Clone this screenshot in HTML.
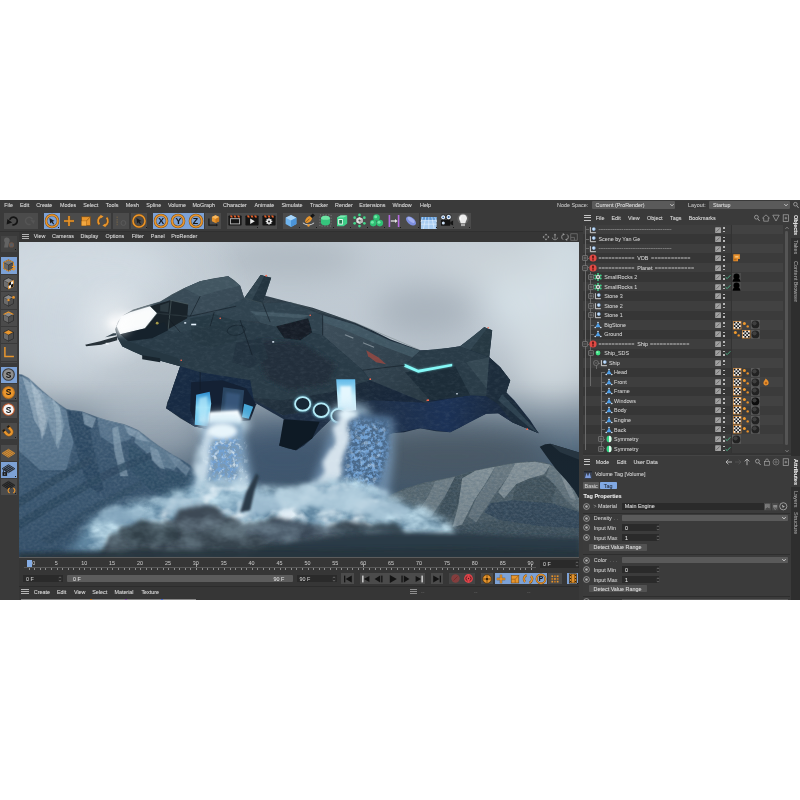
<!DOCTYPE html>
<html><head><meta charset="utf-8"><title>Cinema 4D</title>
<style>
html,body{margin:0;padding:0;background:#fff;width:800px;height:800px;overflow:hidden;}
body{position:relative;font-family:"Liberation Sans", sans-serif;}
#app{position:absolute;left:0;top:200px;width:800px;height:399.5px;background:#3a3a3a;overflow:hidden;}
#g{position:absolute;left:0;top:-200px;width:800px;height:800px;}
#tx{position:absolute;left:0;top:-200px;width:800px;height:800px;will-change:transform;}
.t{position:absolute;white-space:nowrap;line-height:8px;height:8px;-webkit-text-stroke:0.04px currentColor;}
.r{position:absolute;}
svg{position:absolute;overflow:visible;}
</style></head><body>
<div id="app"><div id="g">




















<div class="r" style="left:591.50px;top:200.50px;width:83.50px;height:8.60px;background:#5a5a5a;border-radius:1px;"></div>


<div class="r" style="left:709.00px;top:200.50px;width:81.00px;height:8.60px;background:#5a5a5a;border-radius:1px;"></div>

<svg style="left:668.7px;top:202.2px" width="6" height="6" viewBox="-3 -3 6 6"><path d="M-1.6 -0.8 L0 0.8 L1.6 -0.8" fill="none" stroke="#ddd" stroke-width="0.9"/></svg>
<svg style="left:782.5px;top:202.2px" width="6" height="6" viewBox="-3 -3 6 6"><path d="M-1.6 -0.8 L0 0.8 L1.6 -0.8" fill="none" stroke="#ddd" stroke-width="0.9"/></svg>
<svg style="left:792px;top:201px" width="8" height="8" viewBox="-4 -4 8 8"><circle cx="-0.6" cy="-0.8" r="1.8" fill="none" stroke="#aaa" stroke-width="0.8"/><path d="M0.7 0.6 L2.6 3" stroke="#aaa" stroke-width="0.9" fill="none"/></svg>
<div class="r" style="left:4.00px;top:212.80px;width:33.60px;height:16.00px;background:#4b4b4b;"></div>
<div class="r" style="left:43.80px;top:212.80px;width:67.20px;height:16.00px;background:#4b4b4b;"></div>
<div class="r" style="left:43.80px;top:212.80px;width:15.80px;height:16.00px;background:#7da2d6;"></div>
<div class="r" style="left:113.00px;top:212.80px;width:16.20px;height:16.00px;background:#4b4b4b;"></div>
<div class="r" style="left:131.20px;top:212.80px;width:16.20px;height:16.00px;background:#4b4b4b;"></div>
<div class="r" style="left:152.80px;top:212.80px;width:51.20px;height:16.00px;background:#7da2d6;"></div>
<div class="r" style="left:205.40px;top:212.80px;width:16.00px;height:16.00px;background:#4b4b4b;"></div>
<div class="r" style="left:226.50px;top:212.80px;width:50.50px;height:16.00px;background:#4b4b4b;"></div>
<div class="r" style="left:282.50px;top:212.80px;width:136.90px;height:16.00px;background:#4b4b4b;"></div>
<div class="r" style="left:420.40px;top:212.80px;width:51.10px;height:16.00px;background:#4b4b4b;"></div>
<svg style="left:5.60px;top:213.80px" width="14" height="14" viewBox="-7.0 -7.0 14 14"><path d="M-0.6 3.6 A3.8 3.8 0 1 0 -3.2 -1.2" fill="none" stroke="#141414" stroke-width="1.8"/><path d="M-6.4 3.4 L-5.6 -2 L-0.8 1.4 Z" fill="#141414"/></svg>
<svg style="left:22.00px;top:213.80px" width="14" height="14" viewBox="-7.0 -7.0 14 14"><g transform="scale(-1,1)" opacity="0.55"><path d="M-1.5 3.2 A3.6 3.6 0 1 0 -3.4 -1.6" fill="none" stroke="#5e5e5e" stroke-width="1.5"/><path d="M-6 -0.4 L-1.4 -0.9 L-4.6 2.9 Z" fill="#5e5e5e"/></g></svg>
<svg style="left:43.70px;top:212.80px" width="16" height="16" viewBox="-8.0 -8.0 16 16"><circle r="6" fill="none" stroke="#7a4a12" stroke-width="2.5"/><circle r="6" fill="none" stroke="#e8962e" stroke-width="1.6"/><path d="M-2.6 -3 L2.6 0 L0.6 0.6 L2.2 3 L1.2 3.6 L-0.4 1.2 L-1.8 2.6 Z" fill="#1c1c1c"/></svg>
<div class="r" style="left:58.00px;top:227.20px;width:1.20px;height:1.20px;background:#1a1a1a;"></div>
<svg style="left:61.90px;top:213.80px" width="14" height="14" viewBox="-7.0 -7.0 14 14"><path d="M-5 0 H5 M0 -5 V5" stroke="#7a4a12" stroke-width="2.6"/><path d="M-5 0 H5 M0 -5 V5" stroke="#e8962e" stroke-width="1.6"/></svg>
<svg style="left:78.70px;top:213.80px" width="14" height="14" viewBox="-7.0 -7.0 14 14"><rect x="-4.4" y="-4.2" width="8.8" height="8.8" fill="#e8962e" stroke="#7a4a12" stroke-width="0.6"/><path d="M-4.4 0.2 H0.2 V4.6 M0.2 0.2 L4.4 -4.2" fill="none" stroke="#9a5e14" stroke-width="0.8"/><rect x="-4.4" y="0.2" width="4.6" height="4.4" fill="#f3a840"/></svg>
<svg style="left:95.50px;top:213.80px" width="14" height="14" viewBox="-7.0 -7.0 14 14"><g fill="none" stroke="#7a4a12" stroke-width="2.6"><path d="M-1.8 -4.6 A5 5 0 0 0 -3.6 3.4"/><path d="M1.8 4.6 A5 5 0 0 0 3.6 -3.4"/></g><g fill="none" stroke="#e8962e" stroke-width="1.7"><path d="M-1.8 -4.6 A5 5 0 0 0 -3.6 3.4"/><path d="M1.8 4.6 A5 5 0 0 0 3.6 -3.4"/></g><path d="M-2.6 -6.2 L0.6 -4.4 L-2.4 -2.6 Z M2.6 6.2 L-0.6 4.4 L2.4 2.6 Z" fill="#e8962e"/></svg>
<svg style="left:114.00px;top:213.80px" width="14" height="14" viewBox="-7.0 -7.0 14 14"><g opacity="0.5"><path d="M-3.8 -4.5 V4.5" stroke="#7d6a4a" stroke-width="1.6" stroke-dasharray="1.6 0.8"/><circle cx="2.4" cy="2" r="2.4" fill="none" stroke="#6a6a6a" stroke-width="1"/></g></svg>
<svg style="left:131.30px;top:212.80px" width="16" height="16" viewBox="-8.0 -8.0 16 16"><circle r="6" fill="none" stroke="#7a4a12" stroke-width="2.4"/><circle r="6" fill="none" stroke="#e8962e" stroke-width="1.5"/><path d="M-2.6 -3 L2.6 0 L0.6 0.6 L2.2 3 L1.2 3.6 L-0.4 1.2 L-1.8 2.6 Z" fill="#1c1c1c"/></svg>
<div class="r" style="left:145.60px;top:227.20px;width:1.20px;height:1.20px;background:#1a1a1a;"></div>
<svg style="left:153.30px;top:212.80px" width="16" height="16" viewBox="-8.0 -8.0 16 16"><circle r="6" fill="none" stroke="#7a4a12" stroke-width="2.6"/><circle r="6" fill="none" stroke="#e8962e" stroke-width="1.7"/></svg>

<svg style="left:170.40px;top:212.80px" width="16" height="16" viewBox="-8.0 -8.0 16 16"><circle r="6" fill="none" stroke="#7a4a12" stroke-width="2.6"/><circle r="6" fill="none" stroke="#e8962e" stroke-width="1.7"/></svg>

<svg style="left:187.50px;top:212.80px" width="16" height="16" viewBox="-8.0 -8.0 16 16"><circle r="6" fill="none" stroke="#7a4a12" stroke-width="2.6"/><circle r="6" fill="none" stroke="#e8962e" stroke-width="1.7"/></svg>

<svg style="left:205.90px;top:213.30px" width="15" height="15" viewBox="-7.5 -7.5 15 15"><path d="M-4.6 -2 V4.6 H3.4" fill="none" stroke="#1a1a1a" stroke-width="1.3"/><path d="M2.6 3.2 L4.6 4.6 L2.6 6 Z" fill="#1a1a1a"/><path d="M-1.6 -3.4 L2 -5.2 L5.6 -3.4 L5.6 0.8 L2 2.6 L-1.6 0.8 Z" fill="#e8962e"/><path d="M-1.6 -3.4 L2 -1.6 L5.6 -3.4 L2 -5.2 Z" fill="#f7b860"/><path d="M2 -1.6 V2.6 L5.6 0.8 V-3.4 Z" fill="#c9781c"/></svg>
<svg style="left:227.60px;top:215.10px" width="14" height="11" viewBox="-7.0 -5.5 14 11"><rect x="-6.6" y="-5" width="13.2" height="10" rx="0.8" fill="#141414"/><g fill="#e8622a"><path d="M-5 -5 H-3 L-2.2 -2.9 H-4.2 Z"/><path d="M-1.4 -5 H0.6 L1.4 -2.9 H-0.6 Z"/><path d="M2.2 -5 H4.2 L5 -2.9 H3 Z"/></g><rect x="-4.6" y="-1.8" width="9.2" height="5.2" fill="none" stroke="#bdbdbd" stroke-width="0.9"/></svg>
<svg style="left:244.60px;top:215.10px" width="14" height="11" viewBox="-7.0 -5.5 14 11"><rect x="-6.6" y="-5" width="13.2" height="10" rx="0.8" fill="#141414"/><g fill="#e8622a"><path d="M-5 -5 H-3 L-2.2 -2.9 H-4.2 Z"/><path d="M-1.4 -5 H0.6 L1.4 -2.9 H-0.6 Z"/><path d="M2.2 -5 H4.2 L5 -2.9 H3 Z"/></g><path d="M-1.8 -1.9 L2.8 0.8 L-1.8 3.5 Z" fill="#e8e8e8"/></svg>
<div class="r" style="left:257.40px;top:227.40px;width:1.10px;height:1.10px;background:#1a1a1a;"></div>
<svg style="left:261.90px;top:215.10px" width="14" height="11" viewBox="-7.0 -5.5 14 11"><rect x="-6.6" y="-5" width="13.2" height="10" rx="0.8" fill="#141414"/><g fill="#e8622a"><path d="M-5 -5 H-3 L-2.2 -2.9 H-4.2 Z"/><path d="M-1.4 -5 H0.6 L1.4 -2.9 H-0.6 Z"/><path d="M2.2 -5 H4.2 L5 -2.9 H3 Z"/></g><circle cx="0" cy="0.9" r="2.5" fill="#e6e6e6"/><circle cx="0" cy="0.9" r="1" fill="#141414"/><g stroke="#e6e6e6" stroke-width="1.1"><path d="M0 -2.4 V4.2 M-3.3 0.9 H3.3 M-2.3 -1.4 L2.3 3.2 M2.3 -1.4 L-2.3 3.2"/></g><circle cx="0" cy="0.9" r="1" fill="#141414"/></svg>
<svg style="left:284.30px;top:213.90px" width="14" height="14" viewBox="-7.0 -7.0 14 14"><path d="M0 -6 L5.4 -3.3 V3 L0 6 L-5.4 3 V-3.3 Z" fill="#6fb4ee"/><path d="M0 -6 L5.4 -3.3 L0 -0.6 L-5.4 -3.3 Z" fill="#a9d6fa"/><path d="M0 -0.6 V6 L5.4 3 V-3.3 Z" fill="#4b94d8"/></svg>
<div class="r" style="left:298.80px;top:227.40px;width:1.10px;height:1.10px;background:#1a1a1a;"></div>
<svg style="left:300.70px;top:213.40px" width="15" height="15" viewBox="-7.5 -7.5 15 15"><path d="M-5.6 2.4 Q0 6.6 5.6 2.4" fill="none" stroke="#e0e0e0" stroke-width="0.9"/><circle cx="0" cy="5" r="1.2" fill="#e8962e"/><path d="M-3.4 1.2 C-3.4 -2 -0.8 -4.2 1.6 -4.6 L3.6 -2.4 C3.2 0.2 1 2.6 -2.2 2.6 Z" fill="#e8962e"/><path d="M1.6 -4.6 L4.4 -7 L6.4 -5 L3.6 -2.4 Z" fill="#151515"/><path d="M-2.6 1.8 L1 -1.8" stroke="#7a4a12" stroke-width="0.7"/></svg>
<div class="r" style="left:315.80px;top:227.40px;width:1.10px;height:1.10px;background:#1a1a1a;"></div>
<svg style="left:317.50px;top:213.40px" width="15" height="15" viewBox="-7.5 -7.5 15 15"><rect x="-5.6" y="-5.6" width="11.2" height="11.2" fill="none" stroke="#9a9a9a" stroke-width="0.6" stroke-dasharray="1.2 1.6"/><path d="M0 -4.8 C3 -4.8 4.6 -3.6 4.6 -1 V2 C4.6 4 2.6 5 0 5 C-2.6 5 -4.6 4 -4.6 2 V-1 C-4.6 -3.6 -3 -4.8 0 -4.8 Z" fill="#35c47c"/><path d="M0 -4.8 C3 -4.8 4.6 -3.6 4.4 -1.6 C2 -0.4 -2 -0.4 -4.4 -1.6 C-4.6 -3.6 -3 -4.8 0 -4.8 Z" fill="#6fe4a4"/></svg>
<div class="r" style="left:332.60px;top:227.40px;width:1.10px;height:1.10px;background:#1a1a1a;"></div>
<svg style="left:335.00px;top:213.90px" width="14" height="14" viewBox="-7.0 -7.0 14 14"><path d="M-5 -3.4 L-1.4 -5.4 H5.2 V2.6 L1.6 5.2 H-5 Z" fill="#3ecf88"/><path d="M-5 -3.4 L-1.4 -5.4 H5.2 L1.6 -3.4 Z" fill="#7ceab2"/><rect x="-3.8" y="-2" width="4.6" height="5.6" fill="#e6f6ee"/><rect x="-2.8" y="-1" width="2.8" height="3.6" fill="#2a7a54"/></svg>
<div class="r" style="left:349.60px;top:227.40px;width:1.10px;height:1.10px;background:#1a1a1a;"></div>
<svg style="left:351.80px;top:213.40px" width="15" height="15" viewBox="-7.5 -7.5 15 15"><path d="M0 -3.6 L3.2 -1.8 V1.8 L0 3.6 L-3.2 1.8 V-1.8 Z" fill="#e2e4e2"/><path d="M0 0 V3.6 L3.2 1.8 V-1.8 Z" fill="#b4b8b4"/><circle r="1.1" fill="#555"/><circle cx="0.00" cy="-5.60" r="1.35" fill="#3fd88a"/><circle cx="4.85" cy="-2.80" r="1.35" fill="#3fd88a"/><circle cx="4.85" cy="2.80" r="1.35" fill="#3fd88a"/><circle cx="0.00" cy="5.60" r="1.35" fill="#3fd88a"/><circle cx="-4.85" cy="2.80" r="1.35" fill="#3fd88a"/><circle cx="-4.85" cy="-2.80" r="1.35" fill="#3fd88a"/></svg>
<div class="r" style="left:366.80px;top:227.40px;width:1.10px;height:1.10px;background:#1a1a1a;"></div>
<svg style="left:368.90px;top:213.40px" width="15" height="15" viewBox="-7.5 -7.5 15 15"><g fill="#2fbf74"><circle cx="0" cy="-3" r="3.3"/><circle cx="-3.3" cy="2.6" r="3.3"/><circle cx="3.3" cy="2.6" r="3.3"/></g><g fill="#6ee8a6"><circle cx="-0.8" cy="-3.8" r="1.5"/><circle cx="-4.1" cy="1.8" r="1.5"/><circle cx="2.5" cy="1.8" r="1.5"/></g></svg>
<div class="r" style="left:383.80px;top:227.40px;width:1.10px;height:1.10px;background:#1a1a1a;"></div>
<svg style="left:386.70px;top:213.90px" width="14" height="14" viewBox="-7.0 -7.0 14 14"><rect x="-5.4" y="-6" width="1.6" height="12" fill="#b56be0"/><rect x="3.8" y="-6" width="1.6" height="12" fill="#b56be0"/><path d="M-3.2 0 H1.6" stroke="#e4e4e4" stroke-width="1.3"/><path d="M1 -2 L3.6 0 L1 2 Z" fill="#e4e4e4"/></svg>
<div class="r" style="left:400.40px;top:227.40px;width:1.10px;height:1.10px;background:#1a1a1a;"></div>
<svg style="left:404.00px;top:213.90px" width="14" height="14" viewBox="-7.0 -7.0 14 14"><g transform="rotate(38)"><ellipse rx="5.8" ry="3.4" fill="#7d8fe0"/><ellipse cx="-0.6" cy="-0.9" rx="4.2" ry="1.8" fill="#a3b1f0"/></g></svg>
<div class="r" style="left:417.60px;top:227.40px;width:1.10px;height:1.10px;background:#1a1a1a;"></div>
<svg style="left:421.30px;top:216.70px" width="15.6" height="12" viewBox="-7.8 -6.0 15.6 12"><rect x="-7.8" y="-6" width="15.6" height="12" fill="#a9cdf2"/><rect x="-7.8" y="-6" width="15.6" height="3.4" fill="#5f9ad8"/><g stroke="#e8f3ff" stroke-width="0.6" fill="none"><path d="M-7.8 -2.6 H7.8 M-7.8 1.2 H7.8 M0 -6 V6 M-3 -6 L-5.4 6 M3 -6 L5.4 6 M-6 -6 L-7.8 -1 M6 -6 L7.8 -1"/></g></svg>
<div class="r" style="left:435.60px;top:227.40px;width:1.10px;height:1.10px;background:#1a1a1a;"></div>
<svg style="left:438.80px;top:213.40px" width="15" height="15" viewBox="-7.5 -7.5 15 15"><circle cx="-3.3" cy="-3.2" r="2.5" fill="#e6f0fb" stroke="#141414" stroke-width="0.8"/><circle cx="2.2" cy="-3.4" r="2.7" fill="#e6f0fb" stroke="#141414" stroke-width="0.8"/><circle cx="-3.3" cy="-3.2" r="0.9" fill="#3a6aa8"/><circle cx="2.2" cy="-3.4" r="1" fill="#3a6aa8"/><rect x="-5.6" y="-0.4" width="9.4" height="5.6" rx="0.6" fill="#141414"/><path d="M3.8 1.6 L6.6 0 V5 L3.8 3.4 Z" fill="#141414"/><circle cx="-3.2" cy="2.6" r="1.5" fill="#cfe2f7"/></svg>
<div class="r" style="left:453.00px;top:227.40px;width:1.10px;height:1.10px;background:#1a1a1a;"></div>
<svg style="left:455.80px;top:213.10px" width="14" height="15" viewBox="-7.0 -7.5 14 15"><circle cx="0" cy="-1.6" r="5.6" fill="#fff" opacity="0.14"/><path d="M0 -6 C2.8 -6 4 -4 4 -2.2 C4 -0.4 2.6 0.6 2.4 2.6 H-2.4 C-2.6 0.6 -4 -0.4 -4 -2.2 C-4 -4 -2.8 -6 0 -6 Z" fill="#ececec"/><rect x="-2" y="3" width="4" height="2.6" fill="#a8a8a8"/><path d="M-1.6 -4 C-2.8 -3 -2.8 -1.4 -2 -0.4" stroke="#fff" stroke-width="0.8" fill="none"/></svg>
<div class="r" style="left:469.40px;top:227.40px;width:1.10px;height:1.10px;background:#1a1a1a;"></div>
<div class="r" style="left:0.00px;top:230.80px;width:583.00px;height:0.80px;background:#303030;"></div>
<div class="r" style="left:0.00px;top:231.60px;width:583.00px;height:10.40px;background:#363636;"></div>
<div class="r" style="left:22.20px;top:233.85px;width:6.50px;height:0.90px;background:#b4b4b4;"></div><div class="r" style="left:22.20px;top:235.85px;width:6.50px;height:0.90px;background:#b4b4b4;"></div><div class="r" style="left:22.20px;top:237.85px;width:6.50px;height:0.90px;background:#b4b4b4;"></div>







<svg style="left:541.60px;top:233.00px" width="8" height="8" viewBox="-4.0 -4.0 8 8"><path d="M0 -3.4 L1.4 -1.8 H-1.4 Z M0 3.4 L1.4 1.8 H-1.4 Z M-3.4 0 L-1.8 -1.4 V1.4 Z M3.4 0 L1.8 -1.4 V1.4 Z" fill="#9a9a9a"/></svg>
<svg style="left:551.20px;top:233.00px" width="8" height="8" viewBox="-4.0 -4.0 8 8"><path d="M0 -3.4 L1.4 -1.8 H-1.4 Z" fill="#9a9a9a"/><path d="M0 -2 V1.6 M-2.6 0.6 C-2.6 3.4 2.6 3.4 2.6 0.6" fill="none" stroke="#9a9a9a" stroke-width="0.8"/></svg>
<svg style="left:560.60px;top:233.00px" width="8" height="8" viewBox="-4.0 -4.0 8 8"><path d="M-1.2 -3 A3.2 3.2 0 0 0 -2 2.6 M1.2 3 A3.2 3.2 0 0 0 2 -2.6" fill="none" stroke="#9a9a9a" stroke-width="0.9"/><path d="M-2.4 -3.8 L0 -2.8 L-1.8 -1.4 Z M2.4 3.8 L0 2.8 L1.8 1.4 Z" fill="#9a9a9a"/></svg>
<svg style="left:570.20px;top:233.00px" width="8" height="8" viewBox="-4.0 -4.0 8 8"><rect x="-3.2" y="-3.2" width="6.4" height="6.4" fill="none" stroke="#7a7a7a" stroke-width="0.7"/><path d="M-3.2 0.4 H0.4 V3.2" fill="none" stroke="#7a7a7a" stroke-width="0.7"/></svg>
<div class="r" style="left:0.00px;top:231.60px;width:18.80px;height:368.00px;background:#3a3a3a;"></div>
<div class="r" style="left:0.80px;top:235.60px;width:16.00px;height:16.00px;background:#444;"></div>
<div class="r" style="left:0.80px;top:257.20px;width:16.00px;height:16.60px;background:#7da2d6;"></div>
<div class="r" style="left:0.80px;top:274.70px;width:16.00px;height:16.60px;background:#4b4b4b;"></div>
<div class="r" style="left:0.80px;top:292.10px;width:16.00px;height:16.60px;background:#4b4b4b;"></div>
<div class="r" style="left:0.80px;top:309.50px;width:16.00px;height:16.60px;background:#4b4b4b;"></div>
<div class="r" style="left:0.80px;top:326.90px;width:16.00px;height:16.60px;background:#4b4b4b;"></div>
<div class="r" style="left:0.80px;top:344.30px;width:16.00px;height:16.60px;background:#4b4b4b;"></div>
<div class="r" style="left:0.80px;top:361.70px;width:16.00px;height:0.10px;background:#4b4b4b;"></div>
<div class="r" style="left:0.80px;top:366.60px;width:16.00px;height:16.20px;background:#7da2d6;"></div>
<div class="r" style="left:0.80px;top:384.10px;width:16.00px;height:16.20px;background:#4b4b4b;"></div>
<div class="r" style="left:0.80px;top:401.50px;width:16.00px;height:16.20px;background:#4b4b4b;"></div>
<div class="r" style="left:0.80px;top:423.20px;width:16.00px;height:16.00px;background:#4b4b4b;"></div>
<div class="r" style="left:0.80px;top:445.00px;width:16.00px;height:16.20px;background:#4b4b4b;"></div>
<div class="r" style="left:0.80px;top:462.00px;width:16.00px;height:16.20px;background:#7da2d6;"></div>
<div class="r" style="left:0.80px;top:479.20px;width:16.00px;height:16.20px;background:#4b4b4b;"></div>
<svg style="left:1.10px;top:236.10px" width="15" height="15" viewBox="-7.5 -7.5 15 15"><g opacity="0.45"><path d="M-2 -6 C1 -6 2 -3 0.6 -1 L-0.6 4 H-4.4 L-3.6 -1 C-5 -3 -4.4 -6 -2 -6 Z" fill="#8a8a8a"/><circle cx="3" cy="1.4" r="2.6" fill="#a06a4a"/><circle cx="3" cy="1.4" r="1.6" fill="#6a7a8a"/></g></svg>
<div class="r" style="left:14.80px;top:249.40px;width:1.10px;height:1.10px;background:#1a1a1a;"></div>
<svg style="left:0.70px;top:257.70px" width="15" height="15" viewBox="-7.5 -7.5 15 15"><path d="M0 -5.6 L5 -3.1 V2.9 L0 5.6 L-5 2.9 V-3.1 Z" fill="#686868" stroke="#1c1c1c" stroke-width="0.5"/><path d="M0 -5.6 L5 -3.1 L0 -0.5 L-5 -3.1 Z" fill="#7a7a7a" stroke="#1c1c1c" stroke-width="0.4"/><path d="M0 -0.5 V5.6 L5 2.9 V-3.1 Z" fill="#505050" stroke="#1c1c1c" stroke-width="0.4"/><path d="M0 -5.6 L5 -3.1 V2.9 L0 5.6 L-5 2.9 V-3.1 Z" fill="none" stroke="#e8962e" stroke-width="0.9"/><path d="M5.2 -1 V5 M3.4 1 H7 M3.4 3.4 H7" stroke="#e8962e" stroke-width="1.2"/></svg>
<svg style="left:1.10px;top:275.50px" width="15" height="15" viewBox="-7.5 -7.5 15 15"><path d="M0 -5.6 L5 -3.1 V2.9 L0 5.6 L-5 2.9 V-3.1 Z" fill="#6e6e6e" stroke="#1c1c1c" stroke-width="0.5"/><path d="M0 -5.6 L5 -3.1 L0 -0.5 L-5 -3.1 Z" fill="#8a8a8a" stroke="#1c1c1c" stroke-width="0.4"/><path d="M0 -0.5 V5.6 L5 2.9 V-3.1 Z" fill="#e8e8e8" stroke="#1c1c1c" stroke-width="0.4"/><path d="M0 -0.5 V5.6 L5 2.9 V-3.1 Z" fill="#f2f2f2" stroke="#e8962e" stroke-width="0.8"/><path d="M0 -0.5 L2.5 -1.8 V1.2 L0 2.5 Z M2.5 1.2 L5 -0.1 V2.9 L2.5 4.2 Z" fill="#141414"/></svg>
<svg style="left:1.10px;top:292.90px" width="15" height="15" viewBox="-7.5 -7.5 15 15"><path d="M0 -5.6 L5 -3.1 V2.9 L0 5.6 L-5 2.9 V-3.1 Z" fill="#6a6a6a" stroke="#1c1c1c" stroke-width="0.5"/><path d="M0 -5.6 L5 -3.1 L0 -0.5 L-5 -3.1 Z" fill="#8a8a8a" stroke="#1c1c1c" stroke-width="0.4"/><path d="M0 -0.5 V5.6 L5 2.9 V-3.1 Z" fill="#4e4e4e" stroke="#1c1c1c" stroke-width="0.4"/><circle cx="5" cy="-3.1" r="1.4" fill="#e8962e"/><circle cx="0" cy="-0.5" r="1.2" fill="#e8962e"/></svg>
<svg style="left:1.10px;top:310.30px" width="15" height="15" viewBox="-7.5 -7.5 15 15"><path d="M0 -5.6 L5 -3.1 V2.9 L0 5.6 L-5 2.9 V-3.1 Z" fill="#6a6a6a" stroke="#1c1c1c" stroke-width="0.5"/><path d="M0 -5.6 L5 -3.1 L0 -0.5 L-5 -3.1 Z" fill="#8a8a8a" stroke="#1c1c1c" stroke-width="0.4"/><path d="M0 -0.5 V5.6 L5 2.9 V-3.1 Z" fill="#4e4e4e" stroke="#1c1c1c" stroke-width="0.4"/><path d="M-5 -3.1 L0 -5.6 L5 -3.1" fill="none" stroke="#e8962e" stroke-width="1.1"/></svg>
<svg style="left:1.10px;top:327.70px" width="15" height="15" viewBox="-7.5 -7.5 15 15"><path d="M0 -5.6 L5 -3.1 V2.9 L0 5.6 L-5 2.9 V-3.1 Z" fill="#6a6a6a" stroke="#1c1c1c" stroke-width="0.5"/><path d="M0 -5.6 L5 -3.1 L0 -0.5 L-5 -3.1 Z" fill="#e8962e" stroke="#1c1c1c" stroke-width="0.4"/><path d="M0 -0.5 V5.6 L5 2.9 V-3.1 Z" fill="#4e4e4e" stroke="#1c1c1c" stroke-width="0.4"/></svg>
<svg style="left:1.10px;top:345.10px" width="15" height="15" viewBox="-7.5 -7.5 15 15"><path d="M-3.6 -5.4 V4 H5.4" fill="none" stroke="#e8962e" stroke-width="1.5"/></svg>
<svg style="left:1.10px;top:367.20px" width="15" height="15" viewBox="-7.5 -7.5 15 15"><circle r="5.8" fill="#8e8e8e" stroke="#3a3a3a" stroke-width="1.1"/></svg>
<svg style="left:1.10px;top:384.70px" width="15" height="15" viewBox="-7.5 -7.5 15 15"><circle r="5.8" fill="#e8962e" stroke="#c9781c" stroke-width="1.1"/></svg>
<div class="r" style="left:14.80px;top:398.20px;width:1.10px;height:1.10px;background:#1a1a1a;"></div>
<svg style="left:1.10px;top:402.10px" width="15" height="15" viewBox="-7.5 -7.5 15 15"><circle r="5.8" fill="#f4f4f4" stroke="#c25a2a" stroke-width="1.1"/></svg>
<svg style="left:1.10px;top:423.70px" width="15" height="15" viewBox="-7.5 -7.5 15 15"><g transform="rotate(-40)"><path d="M-4.4 -4.6 V0.6 A4.4 4.4 0 0 0 4.4 0.6 V-4.6 H1.6 V0.6 A1.6 1.6 0 0 1 -1.6 0.6 V-4.6 Z" fill="#e8962e" stroke="#7a4a12" stroke-width="0.5"/><rect x="-4.4" y="-4.8" width="2.8" height="2" fill="#1c1c1c"/><rect x="1.6" y="-4.8" width="2.8" height="2" fill="#1c1c1c"/></g></svg>
<div class="r" style="left:14.80px;top:437.20px;width:1.10px;height:1.10px;background:#1a1a1a;"></div>
<svg style="left:1.10px;top:445.60px" width="15" height="15" viewBox="-7.5 -7.5 15 15"><path d="M0 -4.2 L6.4 -0.2 L0 3.8000000000000003 L-6.4 -0.2 Z" fill="#e8962e" opacity="0.35"/><g stroke="#e8962e" stroke-width="0.7" fill="none"><path d="M-6.40 -0.20 L0.00 3.80"/><path d="M-6.40 -0.20 L0.00 -4.20"/><path d="M-4.80 -1.20 L1.60 2.80"/><path d="M-4.80 0.80 L1.60 -3.20"/><path d="M-3.20 -2.20 L3.20 1.80"/><path d="M-3.20 1.80 L3.20 -2.20"/><path d="M-1.60 -3.20 L4.80 0.80"/><path d="M-1.60 2.80 L4.80 -1.20"/><path d="M0.00 -4.20 L6.40 -0.20"/><path d="M0.00 3.80 L6.40 -0.20"/></g></svg>
<svg style="left:1.10px;top:462.60px" width="15" height="15" viewBox="-7.5 -7.5 15 15"><path d="M0 -5.800000000000001 L6.4 -1.7999999999999998 L0 2.2 L-6.4 -1.7999999999999998 Z" fill="#1c1c1c" opacity="0.35"/><g stroke="#1c1c1c" stroke-width="0.7" fill="none"><path d="M-6.40 -1.80 L0.00 2.20"/><path d="M-6.40 -1.80 L0.00 -5.80"/><path d="M-4.80 -2.80 L1.60 1.20"/><path d="M-4.80 -0.80 L1.60 -4.80"/><path d="M-3.20 -3.80 L3.20 0.20"/><path d="M-3.20 0.20 L3.20 -3.80"/><path d="M-1.60 -4.80 L4.80 -0.80"/><path d="M-1.60 1.20 L4.80 -2.80"/><path d="M0.00 -5.80 L6.40 -1.80"/><path d="M0.00 2.20 L6.40 -1.80"/></g><rect x="-6" y="1.6" width="4.6" height="3.8" fill="#1c1c1c"/><path d="M-5 1.6 V0.4 A1.3 1.3 0 0 1 -2.4 0.4 V1.6" fill="none" stroke="#1c1c1c" stroke-width="0.8"/><rect x="-4.2" y="3" width="1" height="1.2" fill="#9ab4dc"/></svg>
<div class="r" style="left:14.80px;top:476.00px;width:1.10px;height:1.10px;background:#1a1a1a;"></div>
<svg style="left:1.10px;top:479.80px" width="15" height="15" viewBox="-7.5 -7.5 15 15"><path d="M0 -6.2 L6.4 -2.2 L0 1.8 L-6.4 -2.2 Z" fill="#1c1c1c" opacity="0.35"/><g stroke="#1c1c1c" stroke-width="0.7" fill="none"><path d="M-6.40 -2.20 L0.00 1.80"/><path d="M-6.40 -2.20 L0.00 -6.20"/><path d="M-4.80 -3.20 L1.60 0.80"/><path d="M-4.80 -1.20 L1.60 -5.20"/><path d="M-3.20 -4.20 L3.20 -0.20"/><path d="M-3.20 -0.20 L3.20 -4.20"/><path d="M-1.60 -5.20 L4.80 -1.20"/><path d="M-1.60 0.80 L4.80 -3.20"/><path d="M0.00 -6.20 L6.40 -2.20"/><path d="M0.00 1.80 L6.40 -2.20"/></g><g fill="none" stroke="#e8962e" stroke-width="1.2"><path d="M1.2 0.6 A2.6 2.6 0 0 0 1.2 5.4"/><path d="M4.8 5.4 A2.6 2.6 0 0 0 4.8 0.6"/></g></svg>
<div class="r" style="left:14.80px;top:493.20px;width:1.10px;height:1.10px;background:#1a1a1a;"></div>
<svg style="left:18.8px;top:241.8px" width="560.4" height="315.8" viewBox="18.8 241.8 560.4 315.8" preserveAspectRatio="none">
<defs>
<clipPath id="vpc"><rect x="18.8" y="241.8" width="560.4" height="315.8"/></clipPath>
<linearGradient id="sky" x1="0" y1="242" x2="0" y2="558" gradientUnits="userSpaceOnUse">
<stop offset="0" stop-color="#c3cdd5"/><stop offset="0.3" stop-color="#bfc9d2"/><stop offset="0.46" stop-color="#adb8c1"/>
<stop offset="0.56" stop-color="#8797a5"/><stop offset="0.66" stop-color="#617689"/><stop offset="0.78" stop-color="#4f6579"/><stop offset="1" stop-color="#3e5468"/>
</linearGradient>
<radialGradient id="glowL" cx="113" cy="323" r="150" gradientUnits="userSpaceOnUse">
<stop offset="0" stop-color="#fff" stop-opacity="0.85"/><stop offset="0.08" stop-color="#f4f7f9" stop-opacity="0.5"/><stop offset="0.3" stop-color="#e2e8ed" stop-opacity="0.2"/><stop offset="1" stop-color="#d8dfe5" stop-opacity="0"/>
</radialGradient>
<linearGradient id="mtL" x1="30" y1="370" x2="150" y2="540" gradientUnits="userSpaceOnUse">
<stop offset="0" stop-color="#94a9b9"/><stop offset="0.3" stop-color="#6f8aa0"/><stop offset="0.65" stop-color="#55728a"/><stop offset="1" stop-color="#3a536a"/>
</linearGradient>
<linearGradient id="mtR" x1="480" y1="460" x2="520" y2="545" gradientUnits="userSpaceOnUse">
<stop offset="0" stop-color="#96a2a8"/><stop offset="0.3" stop-color="#75848c"/><stop offset="0.7" stop-color="#53636d"/><stop offset="1" stop-color="#3a4a55"/>
</linearGradient>
<linearGradient id="hull" x1="200" y1="280" x2="330" y2="450" gradientUnits="userSpaceOnUse">
<stop offset="0" stop-color="#384853"/><stop offset="0.4" stop-color="#2a3944"/><stop offset="0.75" stop-color="#1e2d3a"/><stop offset="1" stop-color="#17263a"/>
</linearGradient>
<linearGradient id="deck" x1="320" y1="310" x2="420" y2="400" gradientUnits="userSpaceOnUse">
<stop offset="0" stop-color="#40515d"/><stop offset="0.6" stop-color="#32434f"/><stop offset="1" stop-color="#283843"/>
</linearGradient>
<linearGradient id="under" x1="200" y1="0" x2="500" y2="0" gradientUnits="userSpaceOnUse">
<stop offset="0" stop-color="#1d2c40"/><stop offset="0.55" stop-color="#1f3047"/><stop offset="0.82" stop-color="#1b3156"/><stop offset="1" stop-color="#1a2a40"/>
</linearGradient>
<linearGradient id="ground" x1="0" y1="530" x2="0" y2="558" gradientUnits="userSpaceOnUse">
<stop offset="0" stop-color="#3a4d5b"/><stop offset="0.4" stop-color="#2b3c49"/><stop offset="1" stop-color="#22303b"/>
</linearGradient>
<linearGradient id="tint" x1="0" y1="380" x2="0" y2="560" gradientUnits="userSpaceOnUse">
<stop offset="0" stop-color="#17324a" stop-opacity="0"/><stop offset="0.5" stop-color="#17324a" stop-opacity="0.2"/><stop offset="1" stop-color="#132a40" stop-opacity="0.34"/>
</linearGradient>
<filter id="b05" x="-10%" y="-10%" width="120%" height="120%"><feGaussianBlur stdDeviation="0.5"/></filter>
<filter id="b1" x="-20%" y="-20%" width="140%" height="140%"><feGaussianBlur stdDeviation="1"/></filter>
<filter id="b2" x="-30%" y="-30%" width="160%" height="160%"><feGaussianBlur stdDeviation="2.2"/></filter>
<filter id="b4" x="-40%" y="-40%" width="180%" height="180%"><feGaussianBlur stdDeviation="4.5"/></filter>
<filter id="b8" x="-50%" y="-50%" width="200%" height="200%"><feGaussianBlur stdDeviation="9"/></filter>
<filter id="b16" x="-60%" y="-60%" width="220%" height="220%"><feGaussianBlur stdDeviation="16"/></filter>
<filter id="rough" x="-5%" y="-5%" width="110%" height="110%">
<feTurbulence type="fractalNoise" baseFrequency="0.09" numOctaves="3" seed="4" result="n"/>
<feDisplacementMap in="SourceGraphic" in2="n" scale="7" xChannelSelector="R" yChannelSelector="G"/>
<feGaussianBlur stdDeviation="0.7"/>
</filter>
<filter id="puff" x="-20%" y="-20%" width="140%" height="140%">
<feTurbulence type="fractalNoise" baseFrequency="0.06" numOctaves="3" seed="11" result="n"/>
<feDisplacementMap in="SourceGraphic" in2="n" scale="14" xChannelSelector="R" yChannelSelector="G"/>
<feGaussianBlur stdDeviation="2.2"/>
</filter>
<filter id="tex" x="0" y="0" width="100%" height="100%">
<feTurbulence type="fractalNoise" baseFrequency="0.35 0.5" numOctaves="3" seed="7" result="n"/>
<feColorMatrix in="n" type="matrix" values="0 0 0 0 1  0 0 0 0 1  0 0 0 0 1  1.6 0 0 0 -0.55" result="a"/>
<feComposite in="a" in2="SourceGraphic" operator="in"/>
</filter>
<filter id="texd" x="0" y="0" width="100%" height="100%">
<feTurbulence type="fractalNoise" baseFrequency="0.25 0.4" numOctaves="3" seed="23" result="n"/>
<feColorMatrix in="n" type="matrix" values="0 0 0 0 0.1  0 0 0 0 0.17  0 0 0 0 0.24  1.8 0 0 0 -0.7" result="a"/>
<feComposite in="a" in2="SourceGraphic" operator="in"/>
</filter>

<filter id="shiptex" x="0" y="0" width="100%" height="100%">
<feTurbulence type="fractalNoise" baseFrequency="0.16 0.3" numOctaves="3" seed="31" result="n"/>
<feColorMatrix in="n" type="matrix" values="0 0 0 0 0.06  0 0 0 0 0.09  0 0 0 0 0.12  2.4 0 0 0 -0.95" result="a"/>
<feComposite in="a" in2="SourceGraphic" operator="in"/>
</filter>
<filter id="shiptexl" x="0" y="0" width="100%" height="100%">
<feTurbulence type="fractalNoise" baseFrequency="0.2 0.35" numOctaves="3" seed="47" result="n"/>
<feColorMatrix in="n" type="matrix" values="0 0 0 0 0.45  0 0 0 0 0.55  0 0 0 0 0.63  2.4 0 0 0 -1.1" result="a"/>
<feComposite in="a" in2="SourceGraphic" operator="in"/>
</filter>
<filter id="cloud" x="-10%" y="-20%" width="120%" height="140%">
<feTurbulence type="fractalNoise" baseFrequency="0.03 0.05" numOctaves="4" seed="3" result="n"/>
<feColorMatrix in="n" type="matrix" values="0 0 0 0 0.52  0 0 0 0 0.72  0 0 0 0 0.83  2.6 0 0 0 -0.9" result="c"/>
<feGaussianBlur in="SourceGraphic" stdDeviation="3" result="s"/>
<feComposite in="c" in2="s" operator="in"/>
</filter>
<filter id="cloudw" x="-10%" y="-20%" width="120%" height="140%">
<feTurbulence type="fractalNoise" baseFrequency="0.04 0.055" numOctaves="3" seed="9" result="n"/>
<feColorMatrix in="n" type="matrix" values="0 0 0 0 0.76  0 0 0 0 0.86  0 0 0 0 0.92  3.2 0 0 0 -1.45" result="c"/>
<feGaussianBlur in="SourceGraphic" stdDeviation="2.5" result="s"/>
<feComposite in="c" in2="s" operator="in"/>
</filter>
<filter id="cloudd" x="-10%" y="-20%" width="120%" height="140%">
<feTurbulence type="fractalNoise" baseFrequency="0.04 0.06" numOctaves="4" seed="17" result="n"/>
<feColorMatrix in="n" type="matrix" values="0 0 0 0 0.21  0 0 0 0 0.27  0 0 0 0 0.32  3.4 0 0 0 -0.7" result="c"/>
<feGaussianBlur in="SourceGraphic" stdDeviation="3" result="s"/>
<feComposite in="c" in2="s" operator="in"/>
</filter>
<filter id="speck" x="-10%" y="-10%" width="120%" height="120%">
<feTurbulence type="fractalNoise" baseFrequency="0.28" numOctaves="3" seed="5" result="n"/>
<feColorMatrix in="n" type="matrix" values="0 0 0 0 0.17  0 0 0 0 0.36  0 0 0 0 0.66  4 0 0 0 -1.6" result="c"/>
<feGaussianBlur in="SourceGraphic" stdDeviation="3.6" result="s"/>
<feComposite in="c" in2="s" operator="in" result="o"/>
<feGaussianBlur in="o" stdDeviation="0.5"/>
</filter>
<filter id="speckw" x="-10%" y="-10%" width="120%" height="120%">
<feTurbulence type="fractalNoise" baseFrequency="0.22" numOctaves="3" seed="12" result="n"/>
<feColorMatrix in="n" type="matrix" values="0 0 0 0 0.78  0 0 0 0 0.88  0 0 0 0 0.95  4 0 0 0 -2.15" result="c"/>
<feGaussianBlur in="SourceGraphic" stdDeviation="2" result="s"/>
<feComposite in="c" in2="s" operator="in"/>
</filter>
</defs>
<g clip-path="url(#vpc)">
<!-- SKY -->
<rect x="18" y="241" width="562" height="318" fill="url(#sky)"/>
<g filter="url(#b16)">
<ellipse cx="70" cy="270" rx="100" ry="45" fill="#cfd9e1" opacity="0.9"/>
<ellipse cx="60" cy="340" rx="60" ry="40" fill="#c8d3dc" opacity="0.9"/>
<ellipse cx="290" cy="258" rx="70" ry="20" fill="#a9b3bc" opacity="0.8"/>
<ellipse cx="425" cy="312" rx="50" ry="26" fill="#a2adb6" opacity="0.8"/>
<ellipse cx="535" cy="290" rx="50" ry="48" fill="#d5e0e7" opacity="0.95"/>
<ellipse cx="560" cy="252" rx="40" ry="22" fill="#d2dde4" opacity="0.95"/>
<ellipse cx="470" cy="255" rx="70" ry="14" fill="#c8d0d7" opacity="0.8"/>
<ellipse cx="552" cy="352" rx="40" ry="46" fill="#d2dae0" opacity="0.9"/>
<ellipse cx="500" cy="262" rx="60" ry="20" fill="#ccd4da" opacity="0.8"/>
<ellipse cx="150" cy="400" rx="60" ry="22" fill="#b4bfc9" opacity="0.85"/>
<ellipse cx="150" cy="440" rx="60" ry="26" fill="#a7b3be" opacity="0.9"/>
<ellipse cx="450" cy="456" rx="100" ry="30" fill="#525f6a" opacity="0.95"/>
<ellipse cx="285" cy="458" rx="66" ry="34" fill="#4a5e77" opacity="1"/>
</g>
<rect x="18" y="241" width="300" height="240" fill="url(#glowL)"/>
<!-- left mountain -->
<g>
<path id="mL" d="M18 374 L22 374.5 L28.5 378 L36 385 L42.7 391 L51 398 L59 404 L66.5 409 L73 410.5 L80.7 411 L89 414 L97 417 L106 420 L114 422 L123.5 424 L131 427 L137.7 430 L145 435.5 L152 441 L159 446 L166 450.5 L173 455 L180.5 459 L190 465 L196 472 L200 482 L204 494 L230 510 L250 540 L18 560 Z" fill="#3c5a75" filter="url(#b05)"/>
<g filter="url(#b05)">
<path d="M18 375 L28.5 378.5 L42.7 392 L59 405 L66 410 L74 440 L66 470 L40 470 L18 450 Z" fill="#62819b" opacity="0.95"/>
<path d="M22 376 L42 392 L50 412 L44 436 L34 420 L28 396 Z" fill="#9ab2c4" opacity="0.8"/>
<path d="M42.7 392 L59 405 L64 425 L58 450 L50 430 Z" fill="#8aa5ba" opacity="0.8"/>
<path d="M66.5 409.5 L80.7 411.5 L97 417.5 L90 430 L96 460 L104 490 L90 494 L78 456 L70 430 Z" fill="#2d4a64" opacity="0.95"/>
<path d="M97 417.5 L123.5 424.5 L137.7 430.5 L128 440 L112 444 L100 436 Z" fill="#5f7e98" opacity="0.9"/>
<path d="M112 428 L118 426 L122 450 L128 476 L120 476 L114 450 Z" fill="#93adc0" opacity="0.8"/>
<path d="M137.7 430.5 L152 441.5 L166 451 L180.5 459.5 L174 470 L160 466 L146 452 L134 442 Z" fill="#6d8ba3" opacity="0.9"/>
<path d="M150 446 L158 450 L168 478 L160 482 L152 464 Z" fill="#93adc0" opacity="0.75"/>
<path d="M128 442 L146 454 L160 468 L176 472 L196 474 L204 496 L180 500 L150 490 L130 470 Z" fill="#34526c" opacity="0.95"/>
<path d="M18 452 L40 472 L66 472 L100 494 L130 510 L140 540 L18 552 Z" fill="#42607a" opacity="0.95"/>
<path d="M18 498 L50 478 L90 456 L92 462 L52 486 L18 508 Z" fill="#2f4a62" opacity="0.85"/>
<path d="M18 520 L60 494 L110 468 L150 452 L152 458 L112 476 L64 502 L18 530 Z" fill="#304b64" opacity="0.8"/>
<path d="M40 540 L90 506 L140 480 L142 486 L94 514 L50 544 Z" fill="#35516a" opacity="0.7"/>
<path d="M30 380 L40 394 L46 420 L42 440 L38 420 L34 398 Z" fill="#b4c7d5" opacity="0.7"/>
<path d="M52 398 L60 408 L62 436 L56 446 L56 420 Z" fill="#a9bfce" opacity="0.6"/>
<path d="M82 412 L96 418 L92 428 L84 424 Z" fill="#9db5c7" opacity="0.7"/>
<path d="M124 425 L138 431 L150 442 L140 440 L128 434 Z" fill="#9db5c7" opacity="0.7"/>
<path d="M166 452 L180 460 L190 468 L186 476 L174 464 Z" fill="#86a1b6" opacity="0.7"/>
</g>
<path d="M18 374 L22 374.5 L28.5 378 L36 385 L42.7 391 L51 398 L59 404 L66.5 409 L73 410.5 L80.7 411 L89 414 L97 417 L106 420 L114 422 L123.5 424 L131 427 L137.7 430 L145 435.5 L152 441 L159 446 L166 450.5 L173 455 L180.5 459 L190 465 L196 472 L200 482 L204 494 L230 510 L250 540 L18 560 Z" fill="#000" filter="url(#tex)" opacity="0.2"/>
<path d="M18 374 L22 374.5 L28.5 378 L36 385 L42.7 391 L51 398 L59 404 L66.5 409 L73 410.5 L80.7 411 L89 414 L97 417 L106 420 L114 422 L123.5 424 L131 427 L137.7 430 L145 435.5 L152 441 L159 446 L166 450.5 L173 455 L180.5 459 L190 465 L196 472 L200 482 L204 494 L230 510 L250 540 L18 560 Z" fill="#000" filter="url(#texd)" opacity="0.3"/>
</g>
<!-- right mountain -->
<g>
<path id="mR" d="M378 502 L388 496 L395 492.5 L405 488 L415 485 L425 482 L435 480 L445 478 L455 476 L465 473 L475 470 L485 468 L495 466 L505 464 L515 462.5 L525 461.5 L535 461 L543 462 L550 464 L558 469 L565 475 L572 482 L580 490 L580 560 L340 560 L350 520 Z" fill="#5a686d" filter="url(#b05)"/>
<g filter="url(#b05)">
<path d="M395 493 L415 486 L435 481 L428 496 L416 512 L404 524 L392 520 L390 504 Z" fill="#6a787c" opacity="0.9"/>
<path d="M435 481 L455 476.5 L446 494 L434 512 L424 526 L416 514 L428 496 Z" fill="#8a9698" opacity="0.9"/>
<path d="M455 476.5 L475 470.5 L466 488 L456 508 L446 528 L436 516 L446 494 Z" fill="#47555b" opacity="0.9"/>
<path d="M462 478 L475 470.5 L495 466.5 L486 482 L474 500 L462 524 L452 528 L458 506 Z" fill="#a3aeaf" opacity="0.9"/>
<path d="M495 466.5 L515 463 L508 476 L496 492 L484 510 L476 522 L468 516 L476 498 L488 480 Z" fill="#7f8c8f" opacity="0.9"/>
<path d="M515 463 L535 461.5 L550 464.5 L544 474 L530 478 L516 484 L504 498 L498 492 L508 476 Z" fill="#a9b3b4" opacity="0.85"/>
<path d="M516 484 L530 478 L546 476 L556 486 L552 502 L530 504 L512 500 Z" fill="#4a575c" opacity="0.95"/>
<path d="M550 464.5 L565 475.5 L580 490.5 L580 512 L566 500 L556 486 L546 476 Z" fill="#7a878b" opacity="0.9"/>
<path d="M560 474 L568 480 L576 500 L570 498 Z" fill="#aab4b6" opacity="0.7"/>
<path d="M490 503 L512 500 L552 503 L580 512 L580 528 L540 526 L500 520 L484 512 Z" fill="#3a4e5d" opacity="0.98"/>
<path d="M404 524 L424 526 L446 528 L476 522 L500 520 L540 526 L580 528 L580 545 L400 545 Z" fill="#4b5a61" opacity="0.9"/>
</g>
<path d="M378 502 L388 496 L395 492.5 L405 488 L415 485 L425 482 L435 480 L445 478 L455 476 L465 473 L475 470 L485 468 L495 466 L505 464 L515 462.5 L525 461.5 L535 461 L543 462 L550 464 L558 469 L565 475 L572 482 L580 490 L580 560 L340 560 L350 520 Z" fill="#000" filter="url(#tex)" opacity="0.2"/>
<path d="M378 502 L388 496 L395 492.5 L405 488 L415 485 L425 482 L435 480 L445 478 L455 476 L465 473 L475 470 L485 468 L495 466 L505 464 L515 462.5 L525 461.5 L535 461 L543 462 L550 464 L558 469 L565 475 L572 482 L580 490 L580 560 L340 560 L350 520 Z" fill="#000" filter="url(#texd)" opacity="0.35"/>
</g>
<!-- dark rock right -->
<path d="M539.5 446.5 L545 444 L550 443.5 L565 448 L580 452.5 L580 500 L574 490 L566 480 L556 469 L547 457 Z" fill="#18222a"/>
<path d="M550 443.5 L580 452.5 L580 460 L560 452 Z" fill="#2a363f"/>

<rect x="18" y="380" width="562" height="180" fill="url(#tint)"/>
<!--shifted2-->
<!--shifted-->
<g>
<!-- main hull silhouette -->
<path id="hullp" d="M115 329 L118 321 L123 315 L132 310 L146 305.5 L160 301.5 L172 294 L184 288 L200 281 L214 278 L228 276 L234 280 L240 285.5 L244 298 L252 287 L260.5 274.8 L271 277.5 L266 292 L262.5 303 L265 295.5 L290 302 L312.5 307.5 L334 315 L355 322.5 L372 330 L390 339 L406 345 L420 350 L436 349.5 L450 347.5 L460 346 L472 337 L484 327 L492 330 L490.5 344 L489 357 L500 367 L510 380 L506 392 L514 400 L522 410 L530 420 L538.5 433 L526 428 L512 422 L498 413 L486 413.5 L472 420 L460 427 L450 432 L436 431 L420 428 L404 432 L392 433 L385 436 L378 428 L370 420 L358 414 L347 412 L339 414 L330 420 L321 428 L312 438 L304 445 L296 450 L287 448 L279 445 L283 432 L287 421 L282.5 415 L268 409 L254 402 L250 409 L244 415 L238 421 L226 424 L212 430 L194 426 L180 418 L166 408 L167 402 L169 398 L174 383 L180 366 L166 362 L144 356 L132 351 L122 346 L117 337 Z" fill="url(#hull)"/>
<!-- underside navy -->
<path d="M166 408 L174 383 L200 390 L250 397.5 L282.5 415 L330 408 L372 400 L425 402.5 L470 395 L502 394 L538.5 433 L512 422 L498 413 L486 413.5 L460 427 L450 432 L420 428 L392 433 L385 436 L370 420 L347 412 L330 420 L304 445 L296 450 L279 445 L287 421 L254 402 L238 421 L212 430 L194 426 Z" fill="url(#under)"/>
<!-- rear deck lighter plate -->
<path d="M322.5 315 L355 324.5 L390 340.5 L420 350.5 L405 365 L430 400 L425 402.5 L370 380 L362.5 370 L322.5 335 Z" fill="url(#deck)"/>
<path d="M322.5 315 L355 324.5 L390 340.5 L420 350.5 L412 357 L380 345 L345 330 L323 322 Z" fill="#445b68" opacity="0.8"/>
<!-- rear body -->
<path d="M420 350.5 L450 347.5 L460 346 L489 357 L500 367 L510 380 L506 392 L486 396 L470 395 L430 400 L405 365 Z" fill="#293b47"/>
<path d="M405 372 L455 366 L470 395 L430 400 Z" fill="#1c2c38"/>
<path d="M466 362 L489 357 L510 380 L506 392 L488 390 Z" fill="#354853"/>
<!-- top hump lighter -->
<path d="M132 310 L160 301.5 L184 288 L200 281 L228 276 L240 285.5 L244 298 L236 306 L214 312 L190 316 L168 318 L157 313 L150 306 Z" fill="#394b57"/>
<path d="M184 288 L200 281 L228 276 L240 285.5 L220 290 L200 296 Z" fill="#425661"/>
<!-- upper side band -->
<path d="M157 313 L168 318 L214 312 L244 298 L262.5 303 L290 302 L322.5 315 L322.5 335 L300 330 L270 322 L240 320 L210 326 L180 332 L160 330 L145 328 Z" fill="#30434f"/>
<!-- mid body -->
<path d="M145 328 L180 332 L240 320 L300 330 L322.5 335 L362.5 370 L370 380 L330 392 L282.5 400 L250 397.5 L200 390 L174 383 L180 366 L144 356 L122 346 L120 336 Z" fill="#293b47"/>
<path d="M256 340 L300 342 L336 364 L328 384 L290 390 L266 378 L258 356 Z" fill="#202f3a" filter="url(#b2)"/>
<path d="M250 311 L282 312 L310 315 L296 322 L280 327.5 L260 322.5 Z" fill="#374b57"/>
<path d="M250 311 L310 315 L300 318 L256 315 Z" fill="#445a66"/>
<path d="M276 326 L308 318 L312 332 L300 340 L284 338 Z" fill="#131e27" filter="url(#b05)"/>
<path d="M190 318 L214 314 L240 322 L236 340 L210 348 L192 340 Z" fill="#263843" opacity="0.9"/>
<ellipse cx="236" cy="330" rx="9" ry="5" fill="none" stroke="#192731" stroke-width="0.8" transform="rotate(-8 236 330)"/>
<path d="M236 342 L262 338 L268 358 L250 368 L232 362 Z" fill="#22333f" opacity="0.9"/>
<!-- front wing -->
<path d="M180 366 L200 372 L250 380 L254 402 L238 421 L226 424 L212 430 L194 426 L166 408 L169 398 Z" fill="#172a43"/>
<!-- fin 1 -->
<path d="M244 298 L260.5 274.8 L271 277.5 L262.5 303 Z" fill="#23343f"/>
<path d="M244 298 L260.5 274.8 L264 276 L252 300 Z" fill="#30434e"/>
<!-- tail fin -->
<path d="M460 346 L472 337 L484 327 L492 330 L489 357 Z" fill="#263842"/>
<path d="M460 346 L484 327 L487 328 L470 350 Z" fill="#314551"/>
<!-- rear wing -->
<path d="M489 357 L500 367 L510 380 L506 392 L538.5 433 L512 422 L498 404 L486 396 Z" fill="#1c2c3b"/>
<path d="M502 394 L538.5 433 L530 428 L498 400 Z" fill="#2e4250"/>
<path d="M115 329 L118 321 L123 315 L132 310 L146 305.5 L160 301.5 L172 294 L184 288 L200 281 L214 278 L228 276 L234 280 L240 285.5 L244 298 L252 287 L260.5 274.8 L271 277.5 L266 292 L262.5 303 L265 295.5 L290 302 L312.5 307.5 L334 315 L355 322.5 L372 330 L390 339 L406 345 L420 350 L436 349.5 L450 347.5 L460 346 L472 337 L484 327 L492 330 L490.5 344 L489 357 L500 367 L510 380 L506 392 L514 400 L522 410 L530 420 L538.5 433 L526 428 L512 422 L498 413 L486 413.5 L472 420 L460 427 L450 432 L436 431 L420 428 L404 432 L392 433 L385 436 L378 428 L370 420 L358 414 L347 412 L339 414 L330 420 L321 428 L312 438 L304 445 L296 450 L287 448 L279 445 L283 432 L287 421 L282.5 415 L268 409 L254 402 L250 409 L244 415 L238 421 L226 424 L212 430 L194 426 L180 418 L166 408 L167 402 L169 398 L174 383 L180 366 L166 362 L144 356 L132 351 L122 346 L117 337 Z" fill="#000" filter="url(#shiptex)" opacity="0.13"/>
<path d="M115 329 L118 321 L123 315 L132 310 L146 305.5 L160 301.5 L172 294 L184 288 L200 281 L214 278 L228 276 L234 280 L240 285.5 L244 298 L252 287 L260.5 274.8 L271 277.5 L266 292 L262.5 303 L265 295.5 L290 302 L312.5 307.5 L334 315 L355 322.5 L372 330 L390 339 L406 345 L420 350 L436 349.5 L450 347.5 L460 346 L472 337 L484 327 L492 330 L490.5 344 L489 357 L500 367 L510 380 L506 392 L514 400 L522 410 L530 420 L538.5 433 L526 428 L512 422 L498 413 L486 413.5 L472 420 L460 427 L450 432 L436 431 L420 428 L404 432 L392 433 L385 436 L378 428 L370 420 L358 414 L347 412 L339 414 L330 420 L321 428 L312 438 L304 445 L296 450 L287 448 L279 445 L283 432 L287 421 L282.5 415 L268 409 L254 402 L250 409 L244 415 L238 421 L226 424 L212 430 L194 426 L180 418 L166 408 L167 402 L169 398 L174 383 L180 366 L166 362 L144 356 L132 351 L122 346 L117 337 Z" fill="#000" filter="url(#shiptexl)" opacity="0.07"/>
<!-- cockpit -->
<path d="M116.5 326 L121 316 L130 312 L150 306 L157 313 L151 321 L145 328 L120 334 Z" fill="#e9f0f4"/>
<path d="M116.5 326 L121 316 L130 312 L150 306 L157 313 L151 321 L145 328 L120 334 Z" fill="#fff" opacity="0.8" filter="url(#b2)"/>
<path d="M150 306 L170 300 L188 304 L187 318 L168 329 L145 328 L157 313 Z" fill="#19232a"/>
<path d="M157 313 L187 316 M171 300 L168 329 M150 306 L157 313 L145 328 M170 300 L188 304" fill="none" stroke="#4f5e62" stroke-width="0.7"/>
<path d="M160 305 L169 302 L168 312 L160 311 Z" fill="#313f46" opacity="0.8"/>
<path d="M120 334 L145 328 L164 322 L168 330 L152 338 L128 341 Z" fill="#16222c"/>
<path d="M117 337 L122 346 L144 356 L180 366 L178 358 L150 349 L128 341 Z" fill="#263742"/>
<ellipse cx="121" cy="323" rx="9" ry="11" fill="#fff" opacity="0.6" filter="url(#b4)"/>
<!-- guns -->
<path d="M85 344.5 L100 341 L117 336 L117 340 L101 344.5 L86 346 Z" fill="#283239"/>
<rect x="105.5" y="342.6" width="3" height="1.8" fill="#eef4f8"/>
<path d="M105 337 L113 333 L116 333 L116 335 Z" fill="#35444e"/>
<path d="M142 355 L160 358 L160 362 L142 359 Z" fill="#19252e"/>
<!-- cyan strip -->
<path d="M404.5 363.5 L418 369.5 L452 363.5 L452 366 L418 372.5 L404 366.5 Z" fill="#8ff4f2"/>
<path d="M404.5 363.5 L418 369.5 L452 363.5 L452 366 L418 372.5 L404 366.5 Z" fill="#7ff" opacity="0.6" filter="url(#b1)"/>
<!-- center fin hanging -->
<path d="M283.5 419 L319.5 421.5 L312 438 L295.5 450 L279 445.5 Z" fill="#0e1a25"/>
<!-- engine blocks -->
<defs>
<linearGradient id="eng1" x1="0" y1="392" x2="0" y2="426" gradientUnits="userSpaceOnUse"><stop offset="0" stop-color="#2f8fd0"/><stop offset="0.45" stop-color="#8fdaf6"/><stop offset="1" stop-color="#4fb4e4"/></linearGradient>
<linearGradient id="eng2" x1="0" y1="379" x2="0" y2="412" gradientUnits="userSpaceOnUse"><stop offset="0" stop-color="#5fb8e8"/><stop offset="0.5" stop-color="#c4eefc"/><stop offset="1" stop-color="#e8f8fe"/></linearGradient>
</defs>
<path d="M191 382 L222 380 L246 388 L256 404 L250 420 L196 426 L190 410 Z" fill="#142134"/>
<path d="M196 394.5 L209.5 391.5 L211 403.5 L208 426 L194.5 424.5 Z" fill="url(#eng1)" filter="url(#b05)"/>
<path d="M199 398 L207 396 L207.5 408 L205 422 L198.5 421 Z" fill="#b4e8fa" opacity="0.7" filter="url(#b1)"/>
<path d="M223 387 L244 390 L241 418.5 L220 417 Z" fill="#2a4561"/>
<path d="M226 392 L240 394 L238 412 L224 411 Z" fill="#3a5a80" opacity="0.8" filter="url(#b1)"/>
<path d="M244 403.5 L253 406.5 L248.5 418.5 L241.7 417 Z" fill="#46a6d6" filter="url(#b05)"/>
<path d="M209 412 L238 410 L242 420 L238 426 L208 427 Z" fill="#fff" filter="url(#b1)"/>
<path d="M336 379 L355 379 L356 410 L338 412 Z" fill="url(#eng2)" filter="url(#b05)"/>
<path d="M340 386 L351 386 L352 408 L341 408 Z" fill="#e4f7fe" filter="url(#b1)"/>
<!-- rings -->
<g fill="none" stroke="#7fd8f0" stroke-width="3.2" opacity="0.55" filter="url(#b1)">
<ellipse cx="302.5" cy="403.7" rx="7.6" ry="6.8"/><ellipse cx="321" cy="410" rx="7.6" ry="6.8"/><ellipse cx="338.7" cy="415.5" rx="7.6" ry="6.8"/>
</g>
<g fill="#182836" stroke="#b4ecf8" stroke-width="1.8">
<ellipse cx="302.5" cy="403.7" rx="7.6" ry="6.8"/><ellipse cx="321" cy="410" rx="7.6" ry="6.8"/><ellipse cx="338.7" cy="415.5" rx="7.6" ry="6.8"/>
</g>
<!-- panel lines / details -->
<g stroke="#101a22" stroke-width="0.7" fill="none" opacity="0.8">
<path d="M157 313 L190 316 L236 306 M190 316 L200 296 M168 318 L180 332 M214 312 L210 326 M262.5 303 L270 322 M322.5 315 L322.5 335 M362.5 370 L405 365 M240 320 L252 355 M200 372 L200 390"/>
</g>
<g stroke="#576569" stroke-width="0.5" fill="none" opacity="0.7">
<path d="M132 310 L160 301.5 L184 288 M290 302 L355 322.5 L420 350 M244 298 L262.5 303"/>
</g>
<!-- markings -->
<g fill="#9aa6ae" opacity="0.7"><rect x="345" y="334" width="9" height="1.2" transform="rotate(22 345 334)"/><rect x="363" y="342" width="12" height="1.2" transform="rotate(22 363 342)"/></g>
<path d="M366 350 L378 357 L386 364 L376 362 L368 356 Z" fill="#a8483e" opacity="0.7"/>
<!-- small lights -->
<g fill="#ff6a50"><circle cx="266" cy="275.5" r="0.9"/><circle cx="220" cy="318" r="0.8"/><circle cx="181" cy="360" r="0.8"/><circle cx="488" cy="327.5" r="0.8"/><circle cx="370" cy="379" r="0.9"/><circle cx="428" cy="400" r="0.9"/><circle cx="527" cy="429" r="0.9"/><circle cx="310" cy="315" r="0.8"/><circle cx="427" cy="400" r="0.8"/></g>
<g fill="#e8f4ff"><rect x="191" y="323.5" width="5" height="1.6"/><rect x="184" y="322" width="2" height="1.4"/><rect x="272" y="341" width="2" height="1.4"/><rect x="456" y="393" width="1.6" height="1.2"/></g>
<circle cx="157" cy="323" r="1.4" fill="#c8b850" opacity="0.8"/>
</g>

<g>
<!-- engine halo -->
<ellipse cx="223" cy="424" rx="26" ry="12" fill="#d8f0fb" opacity="0.75" filter="url(#b4)"/>
<ellipse cx="350" cy="412" rx="20" ry="10" fill="#c8e8f8" opacity="0.6" filter="url(#b4)"/>
<!-- left column -->
<path d="M204 424 L242 424 L250 470 L262 522 L182 522 L196 470 Z" fill="#8dafcb" opacity="0.78" filter="url(#b4)"/>
<path d="M206 424 L240 424 L246 470 L250 516 L196 516 L202 470 Z" fill="#7797b4" opacity="0.7" filter="url(#b2)"/>
<path d="M213 430 L234 430 L240 456 L238 482 L226 492 L212 486 L207 460 Z" fill="#000" filter="url(#speck)"/>
<path d="M204 440 L244 440 L250 515 L196 515 Z" fill="#000" filter="url(#speckw)" opacity="0.7"/>
<g filter="url(#puff)">
<path d="M206 430 L212 430 L209 470 L204 510 L190 514 L197 470 Z" fill="#d5e6f0" opacity="0.8"/>
<path d="M236 452 L246 478 L256 514 L240 514 L238 478 Z" fill="#c9dfeb" opacity="0.65"/>
<ellipse cx="222" cy="496" rx="30" ry="18" fill="#cfe2ed" opacity="0.9"/>
<ellipse cx="200" cy="470" rx="7" ry="26" fill="#c9deea" opacity="0.5"/>
</g>
<ellipse cx="222" cy="431" rx="15" ry="8" fill="#eef9fe" opacity="0.95" filter="url(#b2)"/>
<!-- right column -->
<path d="M338 412 L394 418 L394 456 L388 500 L306 500 L322 456 Z" fill="#7d9fc0" opacity="0.7" filter="url(#b4)"/>
<path d="M341 412 L390 418 L388 452 L376 494 L320 494 L330 456 Z" fill="#456587" opacity="0.85" filter="url(#b2)"/>
<path d="M352 420 L384 424 L388 450 L380 476 L366 492 L346 484 L348 452 Z" fill="#000" filter="url(#speck)"/>
<path d="M340 420 L388 422 L376 494 L322 494 Z" fill="#000" filter="url(#speckw)" opacity="0.3"/>
<g filter="url(#puff)">
<path d="M340 413 L350 414 L346 446 L339 476 L328 498 L312 496 L328 456 Z" fill="#dce9f1" opacity="0.95"/>
<ellipse cx="326" cy="494" rx="24" ry="14" fill="#cfe2ed" opacity="0.9"/>
<ellipse cx="366" cy="498" rx="22" ry="10" fill="#b4cfdf" opacity="0.7"/>
</g>
<ellipse cx="348" cy="414" rx="10" ry="5" fill="#e6f6fd" opacity="0.9" filter="url(#b2)"/>
<!-- ground smoke base -->
<path d="M74 545 L88 522 L112 508 L150 500 L185 490 L215 480 L250 488 L290 492 L325 482 L352 480 L380 496 L420 510 L445 522 L450 540 L420 548 L60 552 Z" fill="#6c95b0" opacity="0.8" filter="url(#b4)"/>
<path d="M70 552 L84 520 L112 504 L150 496 L185 486 L215 476 L250 484 L290 488 L325 478 L352 476 L384 492 L424 506 L450 520 L456 538 L430 552 Z" fill="#000" filter="url(#cloud)"/>
<path d="M150 530 L170 500 L200 484 L240 486 L290 496 L310 484 L345 480 L370 496 L400 512 L400 530 Z" fill="#000" filter="url(#cloudw)"/>
<g filter="url(#puff)">
<ellipse cx="262" cy="504" rx="22" ry="10" fill="#a9c6d8" opacity="0.8"/>
<ellipse cx="300" cy="498" rx="24" ry="12" fill="#b7d1e0" opacity="0.85"/>
<ellipse cx="345" cy="500" rx="26" ry="12" fill="#b0ccdc" opacity="0.8"/>
<ellipse cx="384" cy="510" rx="22" ry="9" fill="#a2c0d3" opacity="0.8"/>
<ellipse cx="180" cy="506" rx="22" ry="9" fill="#a2c0d3" opacity="0.75"/>
<ellipse cx="124" cy="516" rx="26" ry="8" fill="#86a8bf" opacity="0.7"/>
</g>
<!-- dark smoke low -->
<g filter="url(#puff)">
<path d="M96 562 L108 538 L132 524 L160 526 L186 510 L214 508 L240 522 L276 518 L312 524 L350 520 L384 528 L414 540 L440 562 Z" fill="#38454f"/>
<ellipse cx="200" cy="518" rx="26" ry="12" fill="#3d4a55"/>
<ellipse cx="150" cy="534" rx="32" ry="11" fill="#333f49"/>
<ellipse cx="290" cy="530" rx="44" ry="10" fill="#3b4a59"/>
<ellipse cx="370" cy="534" rx="36" ry="9" fill="#394855"/>
</g>
<path d="M100 560 L116 530 L160 522 L200 512 L240 520 L300 524 L360 526 L420 538 L450 560 Z" fill="#000" filter="url(#cloud)" opacity="0.3"/>
<!-- rock spike -->
<path d="M256 473 L259 476 L254 492 L250 510 L240 512 L246 492 Z" fill="#2a3a4a" filter="url(#b1)"/>
<!-- bottom dark hill -->
<path d="M240 560 L270 545 L320 538 L370 533.5 L410 532 L460 533 L520 536 L580 538 L580 560 Z" fill="#2c3b47" filter="url(#b2)"/>
<path d="M18 553 L150 550 L300 549 L450 548 L580 550 L580 560 L18 560 Z" fill="#26343e" opacity="0.9" filter="url(#b2)"/>
</g>

</g>
</svg>

<div class="r" style="left:18.80px;top:557.50px;width:564.00px;height:42.00px;background:#363636;"></div>
<div class="r" style="left:18.80px;top:557.20px;width:560.40px;height:0.80px;background:#5c5c5c;"></div>
<div class="r" style="left:20.60px;top:598.60px;width:175.00px;height:1.00px;background:#8a8a8a;"></div>
<div class="r" style="left:90.00px;top:598.60px;width:2.00px;height:1.00px;background:#c8823a;"></div>
<div class="r" style="left:125.00px;top:598.60px;width:2.00px;height:1.00px;background:#8a5aa8;"></div>
<div class="r" style="left:160.50px;top:598.60px;width:2.00px;height:1.00px;background:#4a6ad0;"></div>
<div class="r" style="left:28.65px;top:568.20px;width:0.70px;height:2.00px;background:#8e8e8e;"></div>
<div class="r" style="left:34.23px;top:568.20px;width:0.70px;height:2.00px;background:#8e8e8e;"></div>
<div class="r" style="left:39.81px;top:568.20px;width:0.70px;height:2.00px;background:#8e8e8e;"></div>
<div class="r" style="left:45.39px;top:568.20px;width:0.70px;height:2.00px;background:#8e8e8e;"></div>
<div class="r" style="left:50.97px;top:568.20px;width:0.70px;height:2.00px;background:#8e8e8e;"></div>
<div class="r" style="left:56.55px;top:568.20px;width:0.70px;height:2.00px;background:#8e8e8e;"></div>
<div class="r" style="left:62.13px;top:568.20px;width:0.70px;height:2.00px;background:#8e8e8e;"></div>
<div class="r" style="left:67.71px;top:568.20px;width:0.70px;height:2.00px;background:#8e8e8e;"></div>
<div class="r" style="left:73.29px;top:568.20px;width:0.70px;height:2.00px;background:#8e8e8e;"></div>
<div class="r" style="left:78.87px;top:568.20px;width:0.70px;height:2.00px;background:#8e8e8e;"></div>
<div class="r" style="left:84.45px;top:568.20px;width:0.70px;height:2.00px;background:#8e8e8e;"></div>
<div class="r" style="left:90.03px;top:568.20px;width:0.70px;height:2.00px;background:#8e8e8e;"></div>
<div class="r" style="left:95.61px;top:568.20px;width:0.70px;height:2.00px;background:#8e8e8e;"></div>
<div class="r" style="left:101.19px;top:568.20px;width:0.70px;height:2.00px;background:#8e8e8e;"></div>
<div class="r" style="left:106.77px;top:568.20px;width:0.70px;height:2.00px;background:#8e8e8e;"></div>
<div class="r" style="left:112.35px;top:568.20px;width:0.70px;height:2.00px;background:#8e8e8e;"></div>
<div class="r" style="left:117.93px;top:568.20px;width:0.70px;height:2.00px;background:#8e8e8e;"></div>
<div class="r" style="left:123.51px;top:568.20px;width:0.70px;height:2.00px;background:#8e8e8e;"></div>
<div class="r" style="left:129.09px;top:568.20px;width:0.70px;height:2.00px;background:#8e8e8e;"></div>
<div class="r" style="left:134.67px;top:568.20px;width:0.70px;height:2.00px;background:#8e8e8e;"></div>
<div class="r" style="left:140.25px;top:568.20px;width:0.70px;height:2.00px;background:#8e8e8e;"></div>
<div class="r" style="left:145.83px;top:568.20px;width:0.70px;height:2.00px;background:#8e8e8e;"></div>
<div class="r" style="left:151.41px;top:568.20px;width:0.70px;height:2.00px;background:#8e8e8e;"></div>
<div class="r" style="left:156.99px;top:568.20px;width:0.70px;height:2.00px;background:#8e8e8e;"></div>
<div class="r" style="left:162.57px;top:568.20px;width:0.70px;height:2.00px;background:#8e8e8e;"></div>
<div class="r" style="left:168.15px;top:568.20px;width:0.70px;height:2.00px;background:#8e8e8e;"></div>
<div class="r" style="left:173.73px;top:568.20px;width:0.70px;height:2.00px;background:#8e8e8e;"></div>
<div class="r" style="left:179.31px;top:568.20px;width:0.70px;height:2.00px;background:#8e8e8e;"></div>
<div class="r" style="left:184.89px;top:568.20px;width:0.70px;height:2.00px;background:#8e8e8e;"></div>
<div class="r" style="left:190.47px;top:568.20px;width:0.70px;height:2.00px;background:#8e8e8e;"></div>
<div class="r" style="left:196.00px;top:563.80px;width:0.80px;height:6.60px;background:#9a9a9a;"></div>
<div class="r" style="left:201.63px;top:568.20px;width:0.70px;height:2.00px;background:#8e8e8e;"></div>
<div class="r" style="left:207.21px;top:568.20px;width:0.70px;height:2.00px;background:#8e8e8e;"></div>
<div class="r" style="left:212.79px;top:568.20px;width:0.70px;height:2.00px;background:#8e8e8e;"></div>
<div class="r" style="left:218.37px;top:568.20px;width:0.70px;height:2.00px;background:#8e8e8e;"></div>
<div class="r" style="left:223.95px;top:568.20px;width:0.70px;height:2.00px;background:#8e8e8e;"></div>
<div class="r" style="left:229.53px;top:568.20px;width:0.70px;height:2.00px;background:#8e8e8e;"></div>
<div class="r" style="left:235.11px;top:568.20px;width:0.70px;height:2.00px;background:#8e8e8e;"></div>
<div class="r" style="left:240.69px;top:568.20px;width:0.70px;height:2.00px;background:#8e8e8e;"></div>
<div class="r" style="left:246.27px;top:568.20px;width:0.70px;height:2.00px;background:#8e8e8e;"></div>
<div class="r" style="left:251.85px;top:568.20px;width:0.70px;height:2.00px;background:#8e8e8e;"></div>
<div class="r" style="left:257.43px;top:568.20px;width:0.70px;height:2.00px;background:#8e8e8e;"></div>
<div class="r" style="left:263.01px;top:568.20px;width:0.70px;height:2.00px;background:#8e8e8e;"></div>
<div class="r" style="left:268.59px;top:568.20px;width:0.70px;height:2.00px;background:#8e8e8e;"></div>
<div class="r" style="left:274.17px;top:568.20px;width:0.70px;height:2.00px;background:#8e8e8e;"></div>
<div class="r" style="left:279.75px;top:568.20px;width:0.70px;height:2.00px;background:#8e8e8e;"></div>
<div class="r" style="left:285.33px;top:568.20px;width:0.70px;height:2.00px;background:#8e8e8e;"></div>
<div class="r" style="left:290.91px;top:568.20px;width:0.70px;height:2.00px;background:#8e8e8e;"></div>
<div class="r" style="left:296.49px;top:568.20px;width:0.70px;height:2.00px;background:#8e8e8e;"></div>
<div class="r" style="left:302.07px;top:568.20px;width:0.70px;height:2.00px;background:#8e8e8e;"></div>
<div class="r" style="left:307.65px;top:568.20px;width:0.70px;height:2.00px;background:#8e8e8e;"></div>
<div class="r" style="left:313.23px;top:568.20px;width:0.70px;height:2.00px;background:#8e8e8e;"></div>
<div class="r" style="left:318.81px;top:568.20px;width:0.70px;height:2.00px;background:#8e8e8e;"></div>
<div class="r" style="left:324.39px;top:568.20px;width:0.70px;height:2.00px;background:#8e8e8e;"></div>
<div class="r" style="left:329.97px;top:568.20px;width:0.70px;height:2.00px;background:#8e8e8e;"></div>
<div class="r" style="left:335.55px;top:568.20px;width:0.70px;height:2.00px;background:#8e8e8e;"></div>
<div class="r" style="left:341.13px;top:568.20px;width:0.70px;height:2.00px;background:#8e8e8e;"></div>
<div class="r" style="left:346.71px;top:568.20px;width:0.70px;height:2.00px;background:#8e8e8e;"></div>
<div class="r" style="left:352.29px;top:568.20px;width:0.70px;height:2.00px;background:#8e8e8e;"></div>
<div class="r" style="left:357.87px;top:568.20px;width:0.70px;height:2.00px;background:#8e8e8e;"></div>
<div class="r" style="left:363.40px;top:563.80px;width:0.80px;height:6.60px;background:#9a9a9a;"></div>
<div class="r" style="left:369.03px;top:568.20px;width:0.70px;height:2.00px;background:#8e8e8e;"></div>
<div class="r" style="left:374.61px;top:568.20px;width:0.70px;height:2.00px;background:#8e8e8e;"></div>
<div class="r" style="left:380.19px;top:568.20px;width:0.70px;height:2.00px;background:#8e8e8e;"></div>
<div class="r" style="left:385.77px;top:568.20px;width:0.70px;height:2.00px;background:#8e8e8e;"></div>
<div class="r" style="left:391.35px;top:568.20px;width:0.70px;height:2.00px;background:#8e8e8e;"></div>
<div class="r" style="left:396.93px;top:568.20px;width:0.70px;height:2.00px;background:#8e8e8e;"></div>
<div class="r" style="left:402.51px;top:568.20px;width:0.70px;height:2.00px;background:#8e8e8e;"></div>
<div class="r" style="left:408.09px;top:568.20px;width:0.70px;height:2.00px;background:#8e8e8e;"></div>
<div class="r" style="left:413.67px;top:568.20px;width:0.70px;height:2.00px;background:#8e8e8e;"></div>
<div class="r" style="left:419.25px;top:568.20px;width:0.70px;height:2.00px;background:#8e8e8e;"></div>
<div class="r" style="left:424.83px;top:568.20px;width:0.70px;height:2.00px;background:#8e8e8e;"></div>
<div class="r" style="left:430.41px;top:568.20px;width:0.70px;height:2.00px;background:#8e8e8e;"></div>
<div class="r" style="left:435.99px;top:568.20px;width:0.70px;height:2.00px;background:#8e8e8e;"></div>
<div class="r" style="left:441.57px;top:568.20px;width:0.70px;height:2.00px;background:#8e8e8e;"></div>
<div class="r" style="left:447.15px;top:568.20px;width:0.70px;height:2.00px;background:#8e8e8e;"></div>
<div class="r" style="left:452.73px;top:568.20px;width:0.70px;height:2.00px;background:#8e8e8e;"></div>
<div class="r" style="left:458.31px;top:568.20px;width:0.70px;height:2.00px;background:#8e8e8e;"></div>
<div class="r" style="left:463.89px;top:568.20px;width:0.70px;height:2.00px;background:#8e8e8e;"></div>
<div class="r" style="left:469.47px;top:568.20px;width:0.70px;height:2.00px;background:#8e8e8e;"></div>
<div class="r" style="left:475.05px;top:568.20px;width:0.70px;height:2.00px;background:#8e8e8e;"></div>
<div class="r" style="left:480.63px;top:568.20px;width:0.70px;height:2.00px;background:#8e8e8e;"></div>
<div class="r" style="left:486.21px;top:568.20px;width:0.70px;height:2.00px;background:#8e8e8e;"></div>
<div class="r" style="left:491.79px;top:568.20px;width:0.70px;height:2.00px;background:#8e8e8e;"></div>
<div class="r" style="left:497.37px;top:568.20px;width:0.70px;height:2.00px;background:#8e8e8e;"></div>
<div class="r" style="left:502.95px;top:568.20px;width:0.70px;height:2.00px;background:#8e8e8e;"></div>
<div class="r" style="left:508.53px;top:568.20px;width:0.70px;height:2.00px;background:#8e8e8e;"></div>
<div class="r" style="left:514.11px;top:568.20px;width:0.70px;height:2.00px;background:#8e8e8e;"></div>
<div class="r" style="left:519.69px;top:568.20px;width:0.70px;height:2.00px;background:#8e8e8e;"></div>
<div class="r" style="left:525.27px;top:568.20px;width:0.70px;height:2.00px;background:#8e8e8e;"></div>
<div class="r" style="left:530.80px;top:563.80px;width:0.80px;height:6.60px;background:#9a9a9a;"></div>
<div class="r" style="left:24.00px;top:566.70px;width:512.00px;height:0.60px;background:#585858;"></div>



















<div class="r" style="left:27.00px;top:559.60px;width:4.60px;height:7.20px;background:#86aee6;"></div>
<div class="r" style="left:540.00px;top:560.40px;width:39.50px;height:7.80px;background:#2a2a2a;"></div>

<svg style="left:575px;top:560.3px" width="4" height="8" viewBox="-2 -4 4 8"><path d="M-1.2 -0.9 L0 -2.2 L1.2 -0.9 M-1.2 0.9 L0 2.2 L1.2 0.9" fill="none" stroke="#888" stroke-width="0.6"/></svg>
<div class="r" style="left:23.00px;top:574.80px;width:40.00px;height:7.40px;background:#2a2a2a;"></div>

<svg style="left:58.2px;top:574.5px" width="4" height="8" viewBox="-2 -4 4 8"><path d="M-1.2 -0.9 L0 -2.2 L1.2 -0.9 M-1.2 0.9 L0 2.2 L1.2 0.9" fill="none" stroke="#888" stroke-width="0.6"/></svg>
<div class="r" style="left:66.80px;top:574.80px;width:225.80px;height:7.40px;background:#5c5c5c;border-radius:1px;"></div>


<div class="r" style="left:296.50px;top:574.80px;width:40.00px;height:7.40px;background:#2a2a2a;"></div>

<svg style="left:331.7px;top:574.5px" width="4" height="8" viewBox="-2 -4 4 8"><path d="M-1.2 -0.9 L0 -2.2 L1.2 -0.9 M-1.2 0.9 L0 2.2 L1.2 0.9" fill="none" stroke="#888" stroke-width="0.6"/></svg>
<div class="r" style="left:341.20px;top:572.80px;width:12.60px;height:11.50px;background:#4b4b4b;"></div>
<div class="r" style="left:360.00px;top:572.80px;width:65.40px;height:11.50px;background:#4b4b4b;"></div>
<div class="r" style="left:431.20px;top:572.80px;width:12.20px;height:11.50px;background:#4b4b4b;"></div>
<div class="r" style="left:449.00px;top:573.00px;width:25.60px;height:11.40px;background:#444;"></div>
<div class="r" style="left:480.60px;top:573.00px;width:12.40px;height:11.40px;background:#4b4b4b;"></div>
<div class="r" style="left:494.60px;top:573.00px;width:52.80px;height:11.40px;background:#7da2d6;"></div>
<div class="r" style="left:548.00px;top:573.00px;width:13.60px;height:11.40px;background:#4b4b4b;"></div>
<div class="r" style="left:567.00px;top:573.00px;width:11.00px;height:11.40px;background:#7da2d6;"></div>
<svg style="left:341.60px;top:573.70px" width="12" height="10" viewBox="-6.0 -5.0 12 10"><rect x="-4" y="-3.4" width="1.3" height="6.8" fill="#141414"/><path d="M3.8 -3.4 V3.4 L-2.4 0 Z" fill="#141414"/></svg>
<svg style="left:360.00px;top:573.70px" width="12" height="10" viewBox="-6.0 -5.0 12 10"><rect x="-3.8" y="-3.4" width="1.3" height="6.8" fill="#e4e4e4"/><path d="M3.4 -3 V3 L-2.2 0 Z" fill="#141414"/></svg>
<svg style="left:373.20px;top:573.70px" width="12" height="10" viewBox="-6.0 -5.0 12 10"><path d="M1.2 -3.4 V3.4 L-4.4 0 Z" fill="#141414"/><rect x="2.2" y="-3.4" width="1.3" height="6.8" fill="#141414"/></svg>
<svg style="left:386.70px;top:573.70px" width="12" height="10" viewBox="-6.0 -5.0 12 10"><path d="M-3.2 -4.1 V4.1 L3.8 0 Z" fill="#141414"/></svg>
<svg style="left:399.30px;top:573.70px" width="12" height="10" viewBox="-6.0 -5.0 12 10"><rect x="-3.6" y="-3.4" width="1.3" height="6.8" fill="#141414"/><path d="M-1.2 -3.4 V3.4 L4.4 0 Z" fill="#141414"/></svg>
<svg style="left:413.20px;top:573.70px" width="12" height="10" viewBox="-6.0 -5.0 12 10"><path d="M-3.4 -3 V3 L2.2 0 Z" fill="#141414"/><rect x="2.5" y="-3.4" width="1.3" height="6.8" fill="#e4e4e4"/></svg>
<svg style="left:431.30px;top:573.70px" width="12" height="10" viewBox="-6.0 -5.0 12 10"><path d="M-3.8 -3.4 V3.4 L2.4 0 Z" fill="#141414"/><rect x="2.7" y="-3.4" width="1.3" height="6.8" fill="#141414"/></svg>
<svg style="left:449.50px;top:573.20px" width="11" height="11" viewBox="-5.5 -5.5 11 11"><circle r="4.2" fill="#b83a3a" opacity="0.55"/><path d="M-2 2 L2 -2" stroke="#7a2a2a" stroke-width="1"/></svg>
<svg style="left:463.20px;top:573.20px" width="11" height="11" viewBox="-5.5 -5.5 11 11"><circle r="4.4" fill="#e0444a"/><path d="M-1 -2.4 A2.6 2.6 0 0 0 -1 2.4 M1 -2.4 A2.6 2.6 0 0 1 1 2.4" fill="none" stroke="#5a1518" stroke-width="0.9"/><circle r="0.7" fill="#5a1518"/></svg>
<svg style="left:480.60px;top:572.70px" width="12" height="12" viewBox="-6.0 -6.0 12 12"><circle r="4.3" fill="#e8962e" stroke="#5a3608" stroke-width="0.8"/><circle r="1.5" fill="#3a2406"/><path d="M0 -3.4 V-2.2 M0 2.2 V3.4 M-3.4 0 H-2.2 M2.2 0 H3.4" stroke="#3a2406" stroke-width="0.8"/></svg>
<svg style="left:495.40px;top:572.70px" width="12" height="12" viewBox="-6.0 -6.0 12 12"><path d="M-4.2 0 H4.2 M0 -4.2 V4.2" stroke="#7a4a12" stroke-width="2.4"/><path d="M-4.2 0 H4.2 M0 -4.2 V4.2" stroke="#e8962e" stroke-width="1.5"/></svg>
<svg style="left:508.90px;top:572.70px" width="12" height="12" viewBox="-6.0 -6.0 12 12"><rect x="-3.8" y="-3.6" width="7.6" height="7.6" fill="#e8962e" stroke="#7a4a12" stroke-width="0.6"/><path d="M-3.8 0.2 H0.2 V4 M0.2 0.2 L3.8 -3.6" fill="none" stroke="#9a5e14" stroke-width="0.7"/></svg>
<svg style="left:522.00px;top:572.70px" width="12" height="12" viewBox="-6.0 -6.0 12 12"><g fill="none" stroke="#7a4a12" stroke-width="2.3"><path d="M-1.4 -3.9 A4.2 4.2 0 0 0 -3 2.9"/><path d="M1.4 3.9 A4.2 4.2 0 0 0 3 -2.9"/></g><g fill="none" stroke="#e8962e" stroke-width="1.5"><path d="M-1.4 -3.9 A4.2 4.2 0 0 0 -3 2.9"/><path d="M1.4 3.9 A4.2 4.2 0 0 0 3 -2.9"/></g></svg>
<svg style="left:535.00px;top:572.70px" width="12" height="12" viewBox="-6.0 -6.0 12 12"><circle r="4.4" fill="none" stroke="#7a4a12" stroke-width="2"/><circle r="4.4" fill="none" stroke="#e8962e" stroke-width="1.2"/></svg>

<svg style="left:549.80px;top:573.70px" width="10" height="10" viewBox="-5.0 -5.0 10 10"><rect x="-3.6" y="-3.6" width="1.7" height="1.7" fill="#e8962e"/><rect x="-0.9" y="-3.6" width="1.7" height="1.7" fill="#c9781c"/><rect x="1.8" y="-3.6" width="1.7" height="1.7" fill="#e8962e"/><rect x="-3.6" y="-0.9" width="1.7" height="1.7" fill="#c9781c"/><rect x="-0.9" y="-0.9" width="1.7" height="1.7" fill="#e8962e"/><rect x="1.8" y="-0.9" width="1.7" height="1.7" fill="#c9781c"/><rect x="-3.6" y="1.8" width="1.7" height="1.7" fill="#e8962e"/><rect x="-0.9" y="1.8" width="1.7" height="1.7" fill="#c9781c"/><rect x="1.8" y="1.8" width="1.7" height="1.7" fill="#e8962e"/></svg>
<svg style="left:567.50px;top:573.20px" width="10" height="11" viewBox="-5.0 -5.5 10 11"><rect x="-3.4" y="-4.6" width="6.8" height="9.2" fill="#e8962e" stroke="#3a2406" stroke-width="0.7"/><g fill="#3a2406"><rect x="-3" y="-3.6" width="1" height="1.2"/><rect x="-3" y="-0.6" width="1" height="1.2"/><rect x="-3" y="2.4" width="1" height="1.2"/><rect x="2" y="-3.6" width="1" height="1.2"/><rect x="2" y="-0.6" width="1" height="1.2"/><rect x="2" y="2.4" width="1" height="1.2"/></g><path d="M-1.4 -4.6 V4.6 M1.4 -4.6 V4.6" stroke="#3a2406" stroke-width="0.5"/></svg>
<div class="r" style="left:577.40px;top:583.20px;width:1.10px;height:1.10px;background:#1a1a1a;"></div>
<div class="r" style="left:18.80px;top:586.00px;width:564.00px;height:0.60px;background:#2c2c2c;"></div>
<div class="r" style="left:21.40px;top:589.35px;width:7.20px;height:0.90px;background:#b4b4b4;"></div><div class="r" style="left:21.40px;top:591.35px;width:7.20px;height:0.90px;background:#b4b4b4;"></div><div class="r" style="left:21.40px;top:593.35px;width:7.20px;height:0.90px;background:#b4b4b4;"></div>






<div class="r" style="left:409.60px;top:588.75px;width:7.20px;height:1.30px;background:#8e8e8e;"></div><div class="r" style="left:409.60px;top:590.95px;width:7.20px;height:1.30px;background:#8e8e8e;"></div><div class="r" style="left:409.60px;top:593.15px;width:7.20px;height:1.30px;background:#8e8e8e;"></div>



<div class="r" style="left:582.60px;top:210.00px;width:217.40px;height:390.00px;background:#3a3a3a;"></div>
<div class="r" style="left:579.00px;top:231.60px;width:3.80px;height:368.00px;background:#3a3a3a;"></div>
<div class="r" style="left:583.90px;top:215.10px;width:6.80px;height:1.20px;background:#c4c4c4;"></div><div class="r" style="left:583.90px;top:217.30px;width:6.80px;height:1.20px;background:#c4c4c4;"></div><div class="r" style="left:583.90px;top:219.50px;width:6.80px;height:1.20px;background:#c4c4c4;"></div>






<svg style="left:753px;top:214px" width="8" height="8" viewBox="-4 -4 8 8"><circle cx="-0.6" cy="-0.8" r="1.9" fill="none" stroke="#a8a8a8" stroke-width="0.8"/><path d="M0.7 0.6 L2.6 3" stroke="#a8a8a8" stroke-width="0.9" fill="none"/></svg>
<svg style="left:762px;top:214px" width="8" height="8" viewBox="0 0 8 8"><path d="M0.6 4 L4 0.9 L7.4 4 L6.3 4 L6.3 7.2 L1.7 7.2 L1.7 4 Z" fill="none" stroke="#a8a8a8" stroke-width="0.7"/></svg>
<svg style="left:771.8px;top:214px" width="8" height="8" viewBox="0 0 8 8"><path d="M0.8 1.2 L7.2 1.2 L4 7 Z" fill="none" stroke="#a8a8a8" stroke-width="0.7"/></svg>
<svg style="left:781.6px;top:214px" width="8" height="8" viewBox="0 0 8 8"><rect x="1.2" y="0.8" width="5.4" height="6.6" fill="none" stroke="#a8a8a8" stroke-width="0.7"/><path d="M2.6 4.1 H5.2 M3.9 2.8 V5.4" stroke="#a8a8a8" stroke-width="0.7"/></svg>
<div class="r" style="left:582.60px;top:224.85px;width:148.80px;height:9.52px;background:#3e3e3e;"></div>
<div class="r" style="left:731.40px;top:224.85px;width:51.20px;height:9.52px;background:#424242;"></div>
<div class="r" style="left:582.60px;top:234.37px;width:148.80px;height:9.52px;background:#363636;"></div>
<div class="r" style="left:731.40px;top:234.37px;width:51.20px;height:9.52px;background:#3b3b3b;"></div>
<div class="r" style="left:582.60px;top:243.89px;width:148.80px;height:9.52px;background:#3e3e3e;"></div>
<div class="r" style="left:731.40px;top:243.89px;width:51.20px;height:9.52px;background:#424242;"></div>
<div class="r" style="left:582.60px;top:253.41px;width:148.80px;height:9.52px;background:#363636;"></div>
<div class="r" style="left:731.40px;top:253.41px;width:51.20px;height:9.52px;background:#3b3b3b;"></div>
<div class="r" style="left:582.60px;top:262.93px;width:148.80px;height:9.52px;background:#3e3e3e;"></div>
<div class="r" style="left:731.40px;top:262.93px;width:51.20px;height:9.52px;background:#424242;"></div>
<div class="r" style="left:582.60px;top:272.45px;width:148.80px;height:9.52px;background:#363636;"></div>
<div class="r" style="left:731.40px;top:272.45px;width:51.20px;height:9.52px;background:#3b3b3b;"></div>
<div class="r" style="left:582.60px;top:281.97px;width:148.80px;height:9.52px;background:#3e3e3e;"></div>
<div class="r" style="left:731.40px;top:281.97px;width:51.20px;height:9.52px;background:#424242;"></div>
<div class="r" style="left:582.60px;top:291.49px;width:148.80px;height:9.52px;background:#363636;"></div>
<div class="r" style="left:731.40px;top:291.49px;width:51.20px;height:9.52px;background:#3b3b3b;"></div>
<div class="r" style="left:582.60px;top:301.01px;width:148.80px;height:9.52px;background:#3e3e3e;"></div>
<div class="r" style="left:731.40px;top:301.01px;width:51.20px;height:9.52px;background:#424242;"></div>
<div class="r" style="left:582.60px;top:310.53px;width:148.80px;height:9.52px;background:#363636;"></div>
<div class="r" style="left:731.40px;top:310.53px;width:51.20px;height:9.52px;background:#3b3b3b;"></div>
<div class="r" style="left:582.60px;top:320.05px;width:148.80px;height:9.52px;background:#3e3e3e;"></div>
<div class="r" style="left:731.40px;top:320.05px;width:51.20px;height:9.52px;background:#424242;"></div>
<div class="r" style="left:582.60px;top:329.57px;width:148.80px;height:9.52px;background:#363636;"></div>
<div class="r" style="left:731.40px;top:329.57px;width:51.20px;height:9.52px;background:#3b3b3b;"></div>
<div class="r" style="left:582.60px;top:339.09px;width:148.80px;height:9.52px;background:#3e3e3e;"></div>
<div class="r" style="left:731.40px;top:339.09px;width:51.20px;height:9.52px;background:#424242;"></div>
<div class="r" style="left:582.60px;top:348.61px;width:148.80px;height:9.52px;background:#363636;"></div>
<div class="r" style="left:731.40px;top:348.61px;width:51.20px;height:9.52px;background:#3b3b3b;"></div>
<div class="r" style="left:582.60px;top:358.13px;width:148.80px;height:9.52px;background:#3e3e3e;"></div>
<div class="r" style="left:731.40px;top:358.13px;width:51.20px;height:9.52px;background:#424242;"></div>
<div class="r" style="left:582.60px;top:367.65px;width:148.80px;height:9.52px;background:#363636;"></div>
<div class="r" style="left:731.40px;top:367.65px;width:51.20px;height:9.52px;background:#3b3b3b;"></div>
<div class="r" style="left:582.60px;top:377.17px;width:148.80px;height:9.52px;background:#3e3e3e;"></div>
<div class="r" style="left:731.40px;top:377.17px;width:51.20px;height:9.52px;background:#424242;"></div>
<div class="r" style="left:582.60px;top:386.69px;width:148.80px;height:9.52px;background:#363636;"></div>
<div class="r" style="left:731.40px;top:386.69px;width:51.20px;height:9.52px;background:#3b3b3b;"></div>
<div class="r" style="left:582.60px;top:396.21px;width:148.80px;height:9.52px;background:#3e3e3e;"></div>
<div class="r" style="left:731.40px;top:396.21px;width:51.20px;height:9.52px;background:#424242;"></div>
<div class="r" style="left:582.60px;top:405.73px;width:148.80px;height:9.52px;background:#363636;"></div>
<div class="r" style="left:731.40px;top:405.73px;width:51.20px;height:9.52px;background:#3b3b3b;"></div>
<div class="r" style="left:582.60px;top:415.25px;width:148.80px;height:9.52px;background:#3e3e3e;"></div>
<div class="r" style="left:731.40px;top:415.25px;width:51.20px;height:9.52px;background:#424242;"></div>
<div class="r" style="left:582.60px;top:424.77px;width:148.80px;height:9.52px;background:#363636;"></div>
<div class="r" style="left:731.40px;top:424.77px;width:51.20px;height:9.52px;background:#3b3b3b;"></div>
<div class="r" style="left:582.60px;top:434.29px;width:148.80px;height:9.52px;background:#3e3e3e;"></div>
<div class="r" style="left:731.40px;top:434.29px;width:51.20px;height:9.52px;background:#424242;"></div>
<div class="r" style="left:582.60px;top:443.81px;width:148.80px;height:8.92px;background:#363636;"></div>
<div class="r" style="left:731.40px;top:443.81px;width:51.20px;height:8.92px;background:#3b3b3b;"></div>
<div class="r" style="left:731.00px;top:224.85px;width:0.70px;height:228.50px;background:#333;"></div>
<div class="r" style="left:782.60px;top:224.85px;width:7.80px;height:229.00px;background:#3a3a3a;"></div>
<div class="r" style="left:785.20px;top:230.50px;width:2.60px;height:214.00px;background:#555;border-radius:1.3px;"></div>
<svg style="left:783.5px;top:224.6px" width="6" height="6" viewBox="-3 -3 6 6"><path d="M-1.5 0.75 L0 -0.75 L1.5 0.75" fill="none" stroke="#aaa" stroke-width="0.7"/></svg>
<svg style="left:783.5px;top:447.5px" width="6" height="6" viewBox="-3 -3 6 6"><path d="M-1.5 -0.75 L0 0.75 L1.5 -0.75" fill="none" stroke="#aaa" stroke-width="0.7"/></svg>
<div class="r" style="left:585.00px;top:226.00px;width:0.60px;height:224.00px;background:#6a6a6a;"></div>
<div class="r" style="left:590.40px;top:272.00px;width:0.60px;height:114.10px;background:#6a6a6a;"></div>
<div class="r" style="left:590.40px;top:352.00px;width:0.60px;height:8.00px;background:#6a6a6a;"></div>
<div class="r" style="left:595.60px;top:361.00px;width:0.60px;height:8.00px;background:#6a6a6a;"></div>
<div class="r" style="left:601.00px;top:372.00px;width:0.60px;height:78.00px;background:#6a6a6a;"></div>
<div class="r" style="left:585.20px;top:229.30px;width:3.80px;height:0.60px;background:#6a6a6a;"></div>
<svg style="left:589.0px;top:225.6px" width="8" height="8" viewBox="-4 -4 8 8"><path d="M-2.6 -2.8 V2.7 H2.9" fill="none" stroke="#dedede" stroke-width="0.9"/><circle cx="0.8" cy="-0.9" r="1.8" fill="#9cc4ee"/><circle cx="0.6" cy="-1.1" r="0.9" fill="#d4e6fb"/></svg>

<svg style="left:714.6px;top:226.5px" width="6.2" height="6.2" viewBox="0 0 6.2 6.2"><rect x="0.2" y="0.2" width="5.8" height="5.8" rx="0.6" fill="#a2a2a2"/><path d="M1.5 4.7 L4.7 1.5" stroke="#5a5a5a" stroke-width="0.8"/></svg>
<div class="r" style="left:723.30px;top:227.00px;width:1.50px;height:1.50px;background:#b8b8b8;"></div><div class="r" style="left:723.30px;top:230.70px;width:1.50px;height:1.50px;background:#b8b8b8;"></div>
<div class="r" style="left:585.20px;top:238.82px;width:3.80px;height:0.60px;background:#6a6a6a;"></div>
<svg style="left:589.0px;top:235.12px" width="8" height="8" viewBox="-4 -4 8 8"><path d="M-2.6 -2.8 V2.7 H2.9" fill="none" stroke="#dedede" stroke-width="0.9"/><circle cx="0.8" cy="-0.9" r="1.8" fill="#9cc4ee"/><circle cx="0.6" cy="-1.1" r="0.9" fill="#d4e6fb"/></svg>

<svg style="left:714.6px;top:236.02px" width="6.2" height="6.2" viewBox="0 0 6.2 6.2"><rect x="0.2" y="0.2" width="5.8" height="5.8" rx="0.6" fill="#a2a2a2"/><path d="M1.5 4.7 L4.7 1.5" stroke="#5a5a5a" stroke-width="0.8"/></svg>
<div class="r" style="left:723.30px;top:236.52px;width:1.50px;height:1.50px;background:#b8b8b8;"></div><div class="r" style="left:723.30px;top:240.22px;width:1.50px;height:1.50px;background:#b8b8b8;"></div>
<div class="r" style="left:585.20px;top:248.34px;width:3.80px;height:0.60px;background:#6a6a6a;"></div>
<svg style="left:589.0px;top:244.64px" width="8" height="8" viewBox="-4 -4 8 8"><path d="M-2.6 -2.8 V2.7 H2.9" fill="none" stroke="#dedede" stroke-width="0.9"/><circle cx="0.8" cy="-0.9" r="1.8" fill="#9cc4ee"/><circle cx="0.6" cy="-1.1" r="0.9" fill="#d4e6fb"/></svg>

<svg style="left:714.6px;top:245.54px" width="6.2" height="6.2" viewBox="0 0 6.2 6.2"><rect x="0.2" y="0.2" width="5.8" height="5.8" rx="0.6" fill="#a2a2a2"/><path d="M1.5 4.7 L4.7 1.5" stroke="#5a5a5a" stroke-width="0.8"/></svg>
<div class="r" style="left:723.30px;top:246.04px;width:1.50px;height:1.50px;background:#b8b8b8;"></div><div class="r" style="left:723.30px;top:249.74px;width:1.50px;height:1.50px;background:#b8b8b8;"></div>
<div class="r" style="left:587.60px;top:257.86px;width:1.40px;height:0.60px;background:#6a6a6a;"></div>
<svg style="left:582.2px;top:255.15999999999997px" width="6" height="6" viewBox="-3 -3 6 6"><rect x="-2.4" y="-2.4" width="4.8" height="4.8" rx="0.3" fill="#3a3a3a" stroke="#949494" stroke-width="0.6"/><path d="M-1.5 0 H1.5" stroke="#9a9a9a" stroke-width="0.5"/><path d="M0 -1.5 V1.5" stroke="#9a9a9a" stroke-width="0.5"/></svg>
<svg style="left:589.0px;top:254.15999999999997px" width="8" height="8" viewBox="-4 -4 8 8"><circle r="3.6" fill="#e24a45"/><rect x="-0.8" y="-2.4" width="1.6" height="3.2" rx="0.7" fill="#5a1512"/><rect x="-0.9" y="1.3" width="1.8" height="1.1" fill="#5a1512"/></svg>



<svg style="left:714.6px;top:255.05999999999997px" width="6.2" height="6.2" viewBox="0 0 6.2 6.2"><rect x="0.2" y="0.2" width="5.8" height="5.8" rx="0.6" fill="#a2a2a2"/><path d="M1.5 4.7 L4.7 1.5" stroke="#5a5a5a" stroke-width="0.8"/></svg>
<div class="r" style="left:723.30px;top:255.56px;width:1.50px;height:1.50px;background:#b8b8b8;"></div><div class="r" style="left:723.30px;top:259.26px;width:1.50px;height:1.50px;background:#b8b8b8;"></div>
<svg style="left:733.0px;top:254.35999999999996px" width="7.2" height="7.6" viewBox="0 0 7.2 7.6"><path d="M0.3 0.3 H6.9 V5 H5 V7.3 H0.3 Z" fill="#e8902e"/><path d="M2.2 2 H5.4 V3.6 H2.2 Z" fill="#f7c070"/><path d="M1 4.6 H3.6 V6.4 H1 Z" fill="#b86a1a"/></svg>
<div class="r" style="left:587.60px;top:267.38px;width:1.40px;height:0.60px;background:#6a6a6a;"></div>
<svg style="left:582.2px;top:264.68px" width="6" height="6" viewBox="-3 -3 6 6"><rect x="-2.4" y="-2.4" width="4.8" height="4.8" rx="0.3" fill="#3a3a3a" stroke="#949494" stroke-width="0.6"/><path d="M-1.5 0 H1.5" stroke="#9a9a9a" stroke-width="0.5"/></svg>
<svg style="left:589.0px;top:263.68px" width="8" height="8" viewBox="-4 -4 8 8"><circle r="3.6" fill="#e24a45"/><rect x="-0.8" y="-2.4" width="1.6" height="3.2" rx="0.7" fill="#5a1512"/><rect x="-0.9" y="1.3" width="1.8" height="1.1" fill="#5a1512"/></svg>



<svg style="left:714.6px;top:264.58px" width="6.2" height="6.2" viewBox="0 0 6.2 6.2"><rect x="0.2" y="0.2" width="5.8" height="5.8" rx="0.6" fill="#a2a2a2"/><path d="M1.5 4.7 L4.7 1.5" stroke="#5a5a5a" stroke-width="0.8"/></svg>
<div class="r" style="left:723.30px;top:265.08px;width:1.50px;height:1.50px;background:#b8b8b8;"></div><div class="r" style="left:723.30px;top:268.78px;width:1.50px;height:1.50px;background:#b8b8b8;"></div>
<div class="r" style="left:593.00px;top:276.90px;width:1.40px;height:0.60px;background:#6a6a6a;"></div>
<svg style="left:587.6px;top:274.2px" width="6" height="6" viewBox="-3 -3 6 6"><rect x="-2.4" y="-2.4" width="4.8" height="4.8" rx="0.3" fill="#3a3a3a" stroke="#949494" stroke-width="0.6"/><path d="M-1.5 0 H1.5" stroke="#9a9a9a" stroke-width="0.5"/><path d="M0 -1.5 V1.5" stroke="#9a9a9a" stroke-width="0.5"/></svg>
<svg style="left:594.4px;top:273.2px" width="8" height="8" viewBox="-4 -4 8 8"><circle r="2.3" fill="#d8dcd8"/><g fill="#3fce86"><circle cx="0" cy="-3" r="1"/><circle cx="2.7" cy="-1.5" r="1"/><circle cx="2.7" cy="1.5" r="1"/><circle cx="0" cy="3" r="1"/><circle cx="-2.7" cy="1.5" r="1"/><circle cx="-2.7" cy="-1.5" r="1"/></g><circle r="1" fill="#555"/></svg>

<svg style="left:714.6px;top:274.09999999999997px" width="6.2" height="6.2" viewBox="0 0 6.2 6.2"><rect x="0.2" y="0.2" width="5.8" height="5.8" rx="0.6" fill="#a2a2a2"/><path d="M1.5 4.7 L4.7 1.5" stroke="#5a5a5a" stroke-width="0.8"/></svg>
<div class="r" style="left:723.30px;top:274.60px;width:1.50px;height:1.50px;background:#b8b8b8;"></div><div class="r" style="left:723.30px;top:278.30px;width:1.50px;height:1.50px;background:#b8b8b8;"></div>
<svg style="left:725.4px;top:274.2px" width="6" height="6" viewBox="0 0 6 6"><path d="M0.6 3.2 L2.2 4.6 L5.4 1.2" fill="none" stroke="#4fc795" stroke-width="0.8"/></svg>
<svg style="left:732.3000000000001px;top:272.8px" width="9" height="8.8" viewBox="-4.5 -4.4 9 8.8"><rect x="-4.5" y="-4.4" width="9" height="8.8" fill="#4c4c4c"/><circle cx="0" cy="-1" r="3" fill="#000"/><path d="M-4 4.4 C-4 1.5 -2 1 0 1 C2 1 4 1.5 4 4.4 Z" fill="#000"/></svg>
<div class="r" style="left:593.00px;top:286.42px;width:1.40px;height:0.60px;background:#6a6a6a;"></div>
<svg style="left:587.6px;top:283.71999999999997px" width="6" height="6" viewBox="-3 -3 6 6"><rect x="-2.4" y="-2.4" width="4.8" height="4.8" rx="0.3" fill="#3a3a3a" stroke="#949494" stroke-width="0.6"/><path d="M-1.5 0 H1.5" stroke="#9a9a9a" stroke-width="0.5"/><path d="M0 -1.5 V1.5" stroke="#9a9a9a" stroke-width="0.5"/></svg>
<svg style="left:594.4px;top:282.71999999999997px" width="8" height="8" viewBox="-4 -4 8 8"><circle r="2.3" fill="#d8dcd8"/><g fill="#3fce86"><circle cx="0" cy="-3" r="1"/><circle cx="2.7" cy="-1.5" r="1"/><circle cx="2.7" cy="1.5" r="1"/><circle cx="0" cy="3" r="1"/><circle cx="-2.7" cy="1.5" r="1"/><circle cx="-2.7" cy="-1.5" r="1"/></g><circle r="1" fill="#555"/></svg>

<svg style="left:714.6px;top:283.61999999999995px" width="6.2" height="6.2" viewBox="0 0 6.2 6.2"><rect x="0.2" y="0.2" width="5.8" height="5.8" rx="0.6" fill="#a2a2a2"/><path d="M1.5 4.7 L4.7 1.5" stroke="#5a5a5a" stroke-width="0.8"/></svg>
<div class="r" style="left:723.30px;top:284.12px;width:1.50px;height:1.50px;background:#b8b8b8;"></div><div class="r" style="left:723.30px;top:287.82px;width:1.50px;height:1.50px;background:#b8b8b8;"></div>
<svg style="left:725.4px;top:283.71999999999997px" width="6" height="6" viewBox="0 0 6 6"><path d="M0.6 3.2 L2.2 4.6 L5.4 1.2" fill="none" stroke="#4fc795" stroke-width="0.8"/></svg>
<svg style="left:732.3000000000001px;top:282.32px" width="9" height="8.8" viewBox="-4.5 -4.4 9 8.8"><rect x="-4.5" y="-4.4" width="9" height="8.8" fill="#4c4c4c"/><circle cx="0" cy="-1" r="3" fill="#000"/><path d="M-4 4.4 C-4 1.5 -2 1 0 1 C2 1 4 1.5 4 4.4 Z" fill="#000"/></svg>
<div class="r" style="left:593.00px;top:295.94px;width:1.40px;height:0.60px;background:#6a6a6a;"></div>
<svg style="left:587.6px;top:293.24px" width="6" height="6" viewBox="-3 -3 6 6"><rect x="-2.4" y="-2.4" width="4.8" height="4.8" rx="0.3" fill="#3a3a3a" stroke="#949494" stroke-width="0.6"/><path d="M-1.5 0 H1.5" stroke="#9a9a9a" stroke-width="0.5"/><path d="M0 -1.5 V1.5" stroke="#9a9a9a" stroke-width="0.5"/></svg>
<svg style="left:594.4px;top:292.24px" width="8" height="8" viewBox="-4 -4 8 8"><path d="M-2.6 -2.8 V2.7 H2.9" fill="none" stroke="#dedede" stroke-width="0.9"/><circle cx="0.8" cy="-0.9" r="1.8" fill="#9cc4ee"/><circle cx="0.6" cy="-1.1" r="0.9" fill="#d4e6fb"/></svg>

<svg style="left:714.6px;top:293.14px" width="6.2" height="6.2" viewBox="0 0 6.2 6.2"><rect x="0.2" y="0.2" width="5.8" height="5.8" rx="0.6" fill="#a2a2a2"/><path d="M1.5 4.7 L4.7 1.5" stroke="#5a5a5a" stroke-width="0.8"/></svg>
<div class="r" style="left:723.30px;top:293.64px;width:1.50px;height:1.50px;background:#b8b8b8;"></div><div class="r" style="left:723.30px;top:297.34px;width:1.50px;height:1.50px;background:#b8b8b8;"></div>
<div class="r" style="left:593.00px;top:305.46px;width:1.40px;height:0.60px;background:#6a6a6a;"></div>
<svg style="left:587.6px;top:302.76px" width="6" height="6" viewBox="-3 -3 6 6"><rect x="-2.4" y="-2.4" width="4.8" height="4.8" rx="0.3" fill="#3a3a3a" stroke="#949494" stroke-width="0.6"/><path d="M-1.5 0 H1.5" stroke="#9a9a9a" stroke-width="0.5"/><path d="M0 -1.5 V1.5" stroke="#9a9a9a" stroke-width="0.5"/></svg>
<svg style="left:594.4px;top:301.76px" width="8" height="8" viewBox="-4 -4 8 8"><path d="M-2.6 -2.8 V2.7 H2.9" fill="none" stroke="#dedede" stroke-width="0.9"/><circle cx="0.8" cy="-0.9" r="1.8" fill="#9cc4ee"/><circle cx="0.6" cy="-1.1" r="0.9" fill="#d4e6fb"/></svg>

<svg style="left:714.6px;top:302.65999999999997px" width="6.2" height="6.2" viewBox="0 0 6.2 6.2"><rect x="0.2" y="0.2" width="5.8" height="5.8" rx="0.6" fill="#a2a2a2"/><path d="M1.5 4.7 L4.7 1.5" stroke="#5a5a5a" stroke-width="0.8"/></svg>
<div class="r" style="left:723.30px;top:303.16px;width:1.50px;height:1.50px;background:#b8b8b8;"></div><div class="r" style="left:723.30px;top:306.86px;width:1.50px;height:1.50px;background:#b8b8b8;"></div>
<div class="r" style="left:593.00px;top:314.98px;width:1.40px;height:0.60px;background:#6a6a6a;"></div>
<svg style="left:587.6px;top:312.28px" width="6" height="6" viewBox="-3 -3 6 6"><rect x="-2.4" y="-2.4" width="4.8" height="4.8" rx="0.3" fill="#3a3a3a" stroke="#949494" stroke-width="0.6"/><path d="M-1.5 0 H1.5" stroke="#9a9a9a" stroke-width="0.5"/><path d="M0 -1.5 V1.5" stroke="#9a9a9a" stroke-width="0.5"/></svg>
<svg style="left:594.4px;top:311.28px" width="8" height="8" viewBox="-4 -4 8 8"><path d="M-2.6 -2.8 V2.7 H2.9" fill="none" stroke="#dedede" stroke-width="0.9"/><circle cx="0.8" cy="-0.9" r="1.8" fill="#9cc4ee"/><circle cx="0.6" cy="-1.1" r="0.9" fill="#d4e6fb"/></svg>

<svg style="left:714.6px;top:312.17999999999995px" width="6.2" height="6.2" viewBox="0 0 6.2 6.2"><rect x="0.2" y="0.2" width="5.8" height="5.8" rx="0.6" fill="#a2a2a2"/><path d="M1.5 4.7 L4.7 1.5" stroke="#5a5a5a" stroke-width="0.8"/></svg>
<div class="r" style="left:723.30px;top:312.68px;width:1.50px;height:1.50px;background:#b8b8b8;"></div><div class="r" style="left:723.30px;top:316.38px;width:1.50px;height:1.50px;background:#b8b8b8;"></div>
<div class="r" style="left:590.60px;top:324.50px;width:3.80px;height:0.60px;background:#6a6a6a;"></div>
<svg style="left:594.4px;top:320.79999999999995px" width="8" height="8" viewBox="-4 -4 8 8"><path d="M0 -2.4 L2.6 2.3 L-2.6 2.3 Z" fill="#4f9fe8"/><circle cx="0" cy="-2.6" r="0.75" fill="#eaf3ff"/><circle cx="2.8" cy="2.5" r="0.75" fill="#eaf3ff"/><circle cx="-2.8" cy="2.5" r="0.75" fill="#eaf3ff"/></svg>

<svg style="left:714.6px;top:321.69999999999993px" width="6.2" height="6.2" viewBox="0 0 6.2 6.2"><rect x="0.2" y="0.2" width="5.8" height="5.8" rx="0.6" fill="#a2a2a2"/><path d="M1.5 4.7 L4.7 1.5" stroke="#5a5a5a" stroke-width="0.8"/></svg>
<div class="r" style="left:723.30px;top:322.20px;width:1.50px;height:1.50px;background:#b8b8b8;"></div><div class="r" style="left:723.30px;top:325.90px;width:1.50px;height:1.50px;background:#b8b8b8;"></div>
<svg style="left:733.0px;top:320.59999999999997px" width="8.4" height="8.4" viewBox="0 0 8.4 8.4"><rect width="8.4" height="8.4" fill="#d8842a"/><rect x="0.7" y="0.7" width="7" height="7" fill="#f4f4f4"/><rect x="0.7" y="0.7" width="1.75" height="1.75" fill="#141414"/><rect x="4.2" y="0.7" width="1.75" height="1.75" fill="#141414"/><rect x="2.45" y="2.45" width="1.75" height="1.75" fill="#141414"/><rect x="5.95" y="2.45" width="1.75" height="1.75" fill="#141414"/><rect x="0.7" y="4.2" width="1.75" height="1.75" fill="#141414"/><rect x="4.2" y="4.2" width="1.75" height="1.75" fill="#141414"/><rect x="2.45" y="5.95" width="1.75" height="1.75" fill="#141414"/><rect x="5.95" y="5.95" width="1.75" height="1.75" fill="#141414"/></svg>
<svg style="left:742.2px;top:320.79999999999995px" width="8" height="8" viewBox="-4 -4 8 8"><circle cx="-1.6" cy="-1.4" r="1.5" fill="#f09a2e"/><circle cx="1.7" cy="1.4" r="1.2" fill="#e8902a"/></svg>
<svg style="left:751.0px;top:320.4px" width="8.8" height="8.8" viewBox="-4.4 -4.4 8.8 8.8"><rect x="-4.4" y="-4.4" width="8.8" height="8.8" fill="#5c5c5c"/><circle r="3.9" fill="#222"/><circle cx="-0.9" cy="-1.1" r="2.1" fill="#4a4a4a" opacity="0.75"/></svg>
<div class="r" style="left:590.60px;top:334.02px;width:3.80px;height:0.60px;background:#6a6a6a;"></div>
<svg style="left:594.4px;top:330.32px" width="8" height="8" viewBox="-4 -4 8 8"><path d="M0 -2.4 L2.6 2.3 L-2.6 2.3 Z" fill="#4f9fe8"/><circle cx="0" cy="-2.6" r="0.75" fill="#eaf3ff"/><circle cx="2.8" cy="2.5" r="0.75" fill="#eaf3ff"/><circle cx="-2.8" cy="2.5" r="0.75" fill="#eaf3ff"/></svg>

<svg style="left:714.6px;top:331.21999999999997px" width="6.2" height="6.2" viewBox="0 0 6.2 6.2"><rect x="0.2" y="0.2" width="5.8" height="5.8" rx="0.6" fill="#a2a2a2"/><path d="M1.5 4.7 L4.7 1.5" stroke="#5a5a5a" stroke-width="0.8"/></svg>
<div class="r" style="left:723.30px;top:331.72px;width:1.50px;height:1.50px;background:#b8b8b8;"></div><div class="r" style="left:723.30px;top:335.42px;width:1.50px;height:1.50px;background:#b8b8b8;"></div>
<svg style="left:733.2px;top:330.32px" width="8" height="8" viewBox="-4 -4 8 8"><circle cx="-1.6" cy="-1.4" r="1.5" fill="#f09a2e"/><circle cx="1.7" cy="1.4" r="1.2" fill="#e8902a"/></svg>
<svg style="left:742.0px;top:330.12px" width="8.4" height="8.4" viewBox="0 0 8.4 8.4"><rect width="8.4" height="8.4" fill="#d8842a"/><rect x="0.7" y="0.7" width="7" height="7" fill="#f4f4f4"/><rect x="0.7" y="0.7" width="1.75" height="1.75" fill="#141414"/><rect x="4.2" y="0.7" width="1.75" height="1.75" fill="#141414"/><rect x="2.45" y="2.45" width="1.75" height="1.75" fill="#141414"/><rect x="5.95" y="2.45" width="1.75" height="1.75" fill="#141414"/><rect x="0.7" y="4.2" width="1.75" height="1.75" fill="#141414"/><rect x="4.2" y="4.2" width="1.75" height="1.75" fill="#141414"/><rect x="2.45" y="5.95" width="1.75" height="1.75" fill="#141414"/><rect x="5.95" y="5.95" width="1.75" height="1.75" fill="#141414"/></svg>
<svg style="left:751.0px;top:329.92px" width="8.8" height="8.8" viewBox="-4.4 -4.4 8.8 8.8"><rect x="-4.4" y="-4.4" width="8.8" height="8.8" fill="#5c5c5c"/><circle r="3.9" fill="#222"/><circle cx="-0.9" cy="-1.1" r="2.1" fill="#4a4a4a" opacity="0.75"/></svg>
<div class="r" style="left:587.60px;top:343.54px;width:1.40px;height:0.60px;background:#6a6a6a;"></div>
<svg style="left:582.2px;top:340.84px" width="6" height="6" viewBox="-3 -3 6 6"><rect x="-2.4" y="-2.4" width="4.8" height="4.8" rx="0.3" fill="#3a3a3a" stroke="#949494" stroke-width="0.6"/><path d="M-1.5 0 H1.5" stroke="#9a9a9a" stroke-width="0.5"/></svg>
<svg style="left:589.0px;top:339.84px" width="8" height="8" viewBox="-4 -4 8 8"><circle r="3.6" fill="#e24a45"/><rect x="-0.8" y="-2.4" width="1.6" height="3.2" rx="0.7" fill="#5a1512"/><rect x="-0.9" y="1.3" width="1.8" height="1.1" fill="#5a1512"/></svg>



<svg style="left:714.6px;top:340.73999999999995px" width="6.2" height="6.2" viewBox="0 0 6.2 6.2"><rect x="0.2" y="0.2" width="5.8" height="5.8" rx="0.6" fill="#a2a2a2"/><path d="M1.5 4.7 L4.7 1.5" stroke="#5a5a5a" stroke-width="0.8"/></svg>
<div class="r" style="left:723.30px;top:341.24px;width:1.50px;height:1.50px;background:#b8b8b8;"></div><div class="r" style="left:723.30px;top:344.94px;width:1.50px;height:1.50px;background:#b8b8b8;"></div>
<div class="r" style="left:593.00px;top:353.06px;width:1.40px;height:0.60px;background:#6a6a6a;"></div>
<svg style="left:587.6px;top:350.36px" width="6" height="6" viewBox="-3 -3 6 6"><rect x="-2.4" y="-2.4" width="4.8" height="4.8" rx="0.3" fill="#3a3a3a" stroke="#949494" stroke-width="0.6"/><path d="M-1.5 0 H1.5" stroke="#9a9a9a" stroke-width="0.5"/></svg>
<svg style="left:594.4px;top:349.36px" width="8" height="8" viewBox="-4 -4 8 8"><circle r="2.4" fill="#3fe084"/><circle cx="-0.6" cy="-0.7" r="1" fill="#8ff5b8"/></svg>

<svg style="left:714.6px;top:350.26px" width="6.2" height="6.2" viewBox="0 0 6.2 6.2"><rect x="0.2" y="0.2" width="5.8" height="5.8" rx="0.6" fill="#a2a2a2"/><path d="M1.5 4.7 L4.7 1.5" stroke="#5a5a5a" stroke-width="0.8"/></svg>
<div class="r" style="left:723.30px;top:350.76px;width:1.50px;height:1.50px;background:#b8b8b8;"></div><div class="r" style="left:723.30px;top:354.46px;width:1.50px;height:1.50px;background:#b8b8b8;"></div>
<svg style="left:725.4px;top:350.36px" width="6" height="6" viewBox="0 0 6 6"><path d="M0.6 3.2 L2.2 4.6 L5.4 1.2" fill="none" stroke="#4fc795" stroke-width="0.8"/></svg>
<div class="r" style="left:598.20px;top:362.58px;width:1.40px;height:0.60px;background:#6a6a6a;"></div>
<svg style="left:592.8px;top:359.88px" width="6" height="6" viewBox="-3 -3 6 6"><rect x="-2.4" y="-2.4" width="4.8" height="4.8" rx="2" fill="#3a3a3a" stroke="#949494" stroke-width="0.6"/><path d="M-1.5 0 H1.5" stroke="#9a9a9a" stroke-width="0.5"/></svg>
<svg style="left:599.6px;top:358.88px" width="8" height="8" viewBox="-4 -4 8 8"><path d="M-2.6 -2.8 V2.7 H2.9" fill="none" stroke="#dedede" stroke-width="0.9"/><circle cx="0.8" cy="-0.9" r="1.8" fill="#9cc4ee"/><circle cx="0.6" cy="-1.1" r="0.9" fill="#d4e6fb"/></svg>

<svg style="left:714.6px;top:359.78px" width="6.2" height="6.2" viewBox="0 0 6.2 6.2"><rect x="0.2" y="0.2" width="5.8" height="5.8" rx="0.6" fill="#a2a2a2"/><path d="M1.5 4.7 L4.7 1.5" stroke="#5a5a5a" stroke-width="0.8"/></svg>
<div class="r" style="left:723.30px;top:360.28px;width:1.50px;height:1.50px;background:#b8b8b8;"></div><div class="r" style="left:723.30px;top:363.98px;width:1.50px;height:1.50px;background:#b8b8b8;"></div>
<div class="r" style="left:601.20px;top:372.10px;width:3.40px;height:0.60px;background:#6a6a6a;"></div>
<svg style="left:604.6px;top:368.4px" width="8" height="8" viewBox="-4 -4 8 8"><path d="M0 -2.4 L2.6 2.3 L-2.6 2.3 Z" fill="#4f9fe8"/><circle cx="0" cy="-2.6" r="0.75" fill="#eaf3ff"/><circle cx="2.8" cy="2.5" r="0.75" fill="#eaf3ff"/><circle cx="-2.8" cy="2.5" r="0.75" fill="#eaf3ff"/></svg>

<svg style="left:714.6px;top:369.29999999999995px" width="6.2" height="6.2" viewBox="0 0 6.2 6.2"><rect x="0.2" y="0.2" width="5.8" height="5.8" rx="0.6" fill="#a2a2a2"/><path d="M1.5 4.7 L4.7 1.5" stroke="#5a5a5a" stroke-width="0.8"/></svg>
<div class="r" style="left:723.30px;top:369.80px;width:1.50px;height:1.50px;background:#b8b8b8;"></div><div class="r" style="left:723.30px;top:373.50px;width:1.50px;height:1.50px;background:#b8b8b8;"></div>
<svg style="left:733.0px;top:368.2px" width="8.4" height="8.4" viewBox="0 0 8.4 8.4"><rect width="8.4" height="8.4" fill="#d8842a"/><rect x="0.7" y="0.7" width="7" height="7" fill="#f4f4f4"/><rect x="0.7" y="0.7" width="1.75" height="1.75" fill="#141414"/><rect x="4.2" y="0.7" width="1.75" height="1.75" fill="#141414"/><rect x="2.45" y="2.45" width="1.75" height="1.75" fill="#141414"/><rect x="5.95" y="2.45" width="1.75" height="1.75" fill="#141414"/><rect x="0.7" y="4.2" width="1.75" height="1.75" fill="#141414"/><rect x="4.2" y="4.2" width="1.75" height="1.75" fill="#141414"/><rect x="2.45" y="5.95" width="1.75" height="1.75" fill="#141414"/><rect x="5.95" y="5.95" width="1.75" height="1.75" fill="#141414"/></svg>
<svg style="left:742.2px;top:368.4px" width="8" height="8" viewBox="-4 -4 8 8"><circle cx="-1.6" cy="-1.4" r="1.5" fill="#f09a2e"/><circle cx="1.7" cy="1.4" r="1.2" fill="#e8902a"/></svg>
<svg style="left:751.0px;top:368.0px" width="8.8" height="8.8" viewBox="-4.4 -4.4 8.8 8.8"><rect x="-4.4" y="-4.4" width="8.8" height="8.8" fill="#5c5c5c"/><circle r="3.9" fill="#222"/><circle cx="-0.9" cy="-1.1" r="2.1" fill="#4a4a4a" opacity="0.75"/></svg>
<div class="r" style="left:601.20px;top:381.62px;width:3.40px;height:0.60px;background:#6a6a6a;"></div>
<svg style="left:604.6px;top:377.91999999999996px" width="8" height="8" viewBox="-4 -4 8 8"><path d="M0 -2.4 L2.6 2.3 L-2.6 2.3 Z" fill="#4f9fe8"/><circle cx="0" cy="-2.6" r="0.75" fill="#eaf3ff"/><circle cx="2.8" cy="2.5" r="0.75" fill="#eaf3ff"/><circle cx="-2.8" cy="2.5" r="0.75" fill="#eaf3ff"/></svg>

<svg style="left:714.6px;top:378.81999999999994px" width="6.2" height="6.2" viewBox="0 0 6.2 6.2"><rect x="0.2" y="0.2" width="5.8" height="5.8" rx="0.6" fill="#a2a2a2"/><path d="M1.5 4.7 L4.7 1.5" stroke="#5a5a5a" stroke-width="0.8"/></svg>
<div class="r" style="left:723.30px;top:379.32px;width:1.50px;height:1.50px;background:#b8b8b8;"></div><div class="r" style="left:723.30px;top:383.02px;width:1.50px;height:1.50px;background:#b8b8b8;"></div>
<svg style="left:733.0px;top:377.71999999999997px" width="8.4" height="8.4" viewBox="0 0 8.4 8.4"><rect width="8.4" height="8.4" fill="#d8842a"/><rect x="0.7" y="0.7" width="7" height="7" fill="#f4f4f4"/><rect x="0.7" y="0.7" width="1.75" height="1.75" fill="#141414"/><rect x="4.2" y="0.7" width="1.75" height="1.75" fill="#141414"/><rect x="2.45" y="2.45" width="1.75" height="1.75" fill="#141414"/><rect x="5.95" y="2.45" width="1.75" height="1.75" fill="#141414"/><rect x="0.7" y="4.2" width="1.75" height="1.75" fill="#141414"/><rect x="4.2" y="4.2" width="1.75" height="1.75" fill="#141414"/><rect x="2.45" y="5.95" width="1.75" height="1.75" fill="#141414"/><rect x="5.95" y="5.95" width="1.75" height="1.75" fill="#141414"/></svg>
<svg style="left:742.2px;top:377.91999999999996px" width="8" height="8" viewBox="-4 -4 8 8"><circle cx="-1.6" cy="-1.4" r="1.5" fill="#f09a2e"/><circle cx="1.7" cy="1.4" r="1.2" fill="#e8902a"/></svg>
<svg style="left:751.0px;top:377.52px" width="8.8" height="8.8" viewBox="-4.4 -4.4 8.8 8.8"><rect x="-4.4" y="-4.4" width="8.8" height="8.8" fill="#5c5c5c"/><circle r="3.9" fill="#222"/><circle cx="-0.9" cy="-1.1" r="2.1" fill="#4a4a4a" opacity="0.75"/></svg>
<svg style="left:761.6px;top:377.91999999999996px" width="8" height="8" viewBox="-4 -4 8 8"><path d="M-0.5 -3.5 C1.5 -2.5 3 -0.5 2.6 1.5 C2.3 3 0.8 3.6 -0.5 3.4 C-2.2 3.1 -3 1.6 -2.4 0 C-1.8 -1.4 -0.8 -2 -0.5 -3.5 Z" fill="#e8902e"/><circle cx="0" cy="1" r="1.2" fill="#b5651a"/></svg>
<div class="r" style="left:601.20px;top:391.14px;width:3.40px;height:0.60px;background:#6a6a6a;"></div>
<svg style="left:604.6px;top:387.44px" width="8" height="8" viewBox="-4 -4 8 8"><path d="M0 -2.4 L2.6 2.3 L-2.6 2.3 Z" fill="#4f9fe8"/><circle cx="0" cy="-2.6" r="0.75" fill="#eaf3ff"/><circle cx="2.8" cy="2.5" r="0.75" fill="#eaf3ff"/><circle cx="-2.8" cy="2.5" r="0.75" fill="#eaf3ff"/></svg>

<svg style="left:714.6px;top:388.34px" width="6.2" height="6.2" viewBox="0 0 6.2 6.2"><rect x="0.2" y="0.2" width="5.8" height="5.8" rx="0.6" fill="#a2a2a2"/><path d="M1.5 4.7 L4.7 1.5" stroke="#5a5a5a" stroke-width="0.8"/></svg>
<div class="r" style="left:723.30px;top:388.84px;width:1.50px;height:1.50px;background:#b8b8b8;"></div><div class="r" style="left:723.30px;top:392.54px;width:1.50px;height:1.50px;background:#b8b8b8;"></div>
<svg style="left:733.0px;top:387.24px" width="8.4" height="8.4" viewBox="0 0 8.4 8.4"><rect width="8.4" height="8.4" fill="#d8842a"/><rect x="0.7" y="0.7" width="7" height="7" fill="#f4f4f4"/><rect x="0.7" y="0.7" width="1.75" height="1.75" fill="#141414"/><rect x="4.2" y="0.7" width="1.75" height="1.75" fill="#141414"/><rect x="2.45" y="2.45" width="1.75" height="1.75" fill="#141414"/><rect x="5.95" y="2.45" width="1.75" height="1.75" fill="#141414"/><rect x="0.7" y="4.2" width="1.75" height="1.75" fill="#141414"/><rect x="4.2" y="4.2" width="1.75" height="1.75" fill="#141414"/><rect x="2.45" y="5.95" width="1.75" height="1.75" fill="#141414"/><rect x="5.95" y="5.95" width="1.75" height="1.75" fill="#141414"/></svg>
<svg style="left:742.2px;top:387.44px" width="8" height="8" viewBox="-4 -4 8 8"><circle cx="-1.6" cy="-1.4" r="1.5" fill="#f09a2e"/><circle cx="1.7" cy="1.4" r="1.2" fill="#e8902a"/></svg>
<svg style="left:751.0px;top:387.04px" width="8.8" height="8.8" viewBox="-4.4 -4.4 8.8 8.8"><rect x="-4.4" y="-4.4" width="8.8" height="8.8" fill="#5c5c5c"/><circle r="3.9" fill="#222"/><circle cx="-0.9" cy="-1.1" r="2.1" fill="#4a4a4a" opacity="0.75"/></svg>
<div class="r" style="left:601.20px;top:400.66px;width:3.40px;height:0.60px;background:#6a6a6a;"></div>
<svg style="left:604.6px;top:396.96px" width="8" height="8" viewBox="-4 -4 8 8"><path d="M0 -2.4 L2.6 2.3 L-2.6 2.3 Z" fill="#4f9fe8"/><circle cx="0" cy="-2.6" r="0.75" fill="#eaf3ff"/><circle cx="2.8" cy="2.5" r="0.75" fill="#eaf3ff"/><circle cx="-2.8" cy="2.5" r="0.75" fill="#eaf3ff"/></svg>

<svg style="left:714.6px;top:397.85999999999996px" width="6.2" height="6.2" viewBox="0 0 6.2 6.2"><rect x="0.2" y="0.2" width="5.8" height="5.8" rx="0.6" fill="#a2a2a2"/><path d="M1.5 4.7 L4.7 1.5" stroke="#5a5a5a" stroke-width="0.8"/></svg>
<div class="r" style="left:723.30px;top:398.36px;width:1.50px;height:1.50px;background:#b8b8b8;"></div><div class="r" style="left:723.30px;top:402.06px;width:1.50px;height:1.50px;background:#b8b8b8;"></div>
<svg style="left:733.0px;top:396.76px" width="8.4" height="8.4" viewBox="0 0 8.4 8.4"><rect width="8.4" height="8.4" fill="#d8842a"/><rect x="0.7" y="0.7" width="7" height="7" fill="#f4f4f4"/><rect x="0.7" y="0.7" width="1.75" height="1.75" fill="#141414"/><rect x="4.2" y="0.7" width="1.75" height="1.75" fill="#141414"/><rect x="2.45" y="2.45" width="1.75" height="1.75" fill="#141414"/><rect x="5.95" y="2.45" width="1.75" height="1.75" fill="#141414"/><rect x="0.7" y="4.2" width="1.75" height="1.75" fill="#141414"/><rect x="4.2" y="4.2" width="1.75" height="1.75" fill="#141414"/><rect x="2.45" y="5.95" width="1.75" height="1.75" fill="#141414"/><rect x="5.95" y="5.95" width="1.75" height="1.75" fill="#141414"/></svg>
<svg style="left:742.2px;top:396.96px" width="8" height="8" viewBox="-4 -4 8 8"><circle cx="-1.6" cy="-1.4" r="1.5" fill="#f09a2e"/><circle cx="1.7" cy="1.4" r="1.2" fill="#e8902a"/></svg>
<svg style="left:751.0px;top:396.56px" width="8.8" height="8.8" viewBox="-4.4 -4.4 8.8 8.8"><rect x="-4.4" y="-4.4" width="8.8" height="8.8" fill="#5c5c5c"/><circle r="3.9" fill="#0c0c0c"/><circle cx="-0.9" cy="-1.1" r="2.1" fill="#4a4a4a" opacity="0.75"/></svg>
<div class="r" style="left:601.20px;top:410.18px;width:3.40px;height:0.60px;background:#6a6a6a;"></div>
<svg style="left:604.6px;top:406.48px" width="8" height="8" viewBox="-4 -4 8 8"><path d="M0 -2.4 L2.6 2.3 L-2.6 2.3 Z" fill="#4f9fe8"/><circle cx="0" cy="-2.6" r="0.75" fill="#eaf3ff"/><circle cx="2.8" cy="2.5" r="0.75" fill="#eaf3ff"/><circle cx="-2.8" cy="2.5" r="0.75" fill="#eaf3ff"/></svg>

<svg style="left:714.6px;top:407.38px" width="6.2" height="6.2" viewBox="0 0 6.2 6.2"><rect x="0.2" y="0.2" width="5.8" height="5.8" rx="0.6" fill="#a2a2a2"/><path d="M1.5 4.7 L4.7 1.5" stroke="#5a5a5a" stroke-width="0.8"/></svg>
<div class="r" style="left:723.30px;top:407.88px;width:1.50px;height:1.50px;background:#b8b8b8;"></div><div class="r" style="left:723.30px;top:411.58px;width:1.50px;height:1.50px;background:#b8b8b8;"></div>
<svg style="left:733.0px;top:406.28000000000003px" width="8.4" height="8.4" viewBox="0 0 8.4 8.4"><rect width="8.4" height="8.4" fill="#d8842a"/><rect x="0.7" y="0.7" width="7" height="7" fill="#f4f4f4"/><rect x="0.7" y="0.7" width="1.75" height="1.75" fill="#141414"/><rect x="4.2" y="0.7" width="1.75" height="1.75" fill="#141414"/><rect x="2.45" y="2.45" width="1.75" height="1.75" fill="#141414"/><rect x="5.95" y="2.45" width="1.75" height="1.75" fill="#141414"/><rect x="0.7" y="4.2" width="1.75" height="1.75" fill="#141414"/><rect x="4.2" y="4.2" width="1.75" height="1.75" fill="#141414"/><rect x="2.45" y="5.95" width="1.75" height="1.75" fill="#141414"/><rect x="5.95" y="5.95" width="1.75" height="1.75" fill="#141414"/></svg>
<svg style="left:742.2px;top:406.48px" width="8" height="8" viewBox="-4 -4 8 8"><circle cx="-1.6" cy="-1.4" r="1.5" fill="#f09a2e"/><circle cx="1.7" cy="1.4" r="1.2" fill="#e8902a"/></svg>
<svg style="left:751.0px;top:406.08000000000004px" width="8.8" height="8.8" viewBox="-4.4 -4.4 8.8 8.8"><rect x="-4.4" y="-4.4" width="8.8" height="8.8" fill="#5c5c5c"/><circle r="3.9" fill="#222"/><circle cx="-0.9" cy="-1.1" r="2.1" fill="#4a4a4a" opacity="0.75"/></svg>
<div class="r" style="left:601.20px;top:419.70px;width:3.40px;height:0.60px;background:#6a6a6a;"></div>
<svg style="left:604.6px;top:416.0px" width="8" height="8" viewBox="-4 -4 8 8"><path d="M0 -2.4 L2.6 2.3 L-2.6 2.3 Z" fill="#4f9fe8"/><circle cx="0" cy="-2.6" r="0.75" fill="#eaf3ff"/><circle cx="2.8" cy="2.5" r="0.75" fill="#eaf3ff"/><circle cx="-2.8" cy="2.5" r="0.75" fill="#eaf3ff"/></svg>

<svg style="left:714.6px;top:416.9px" width="6.2" height="6.2" viewBox="0 0 6.2 6.2"><rect x="0.2" y="0.2" width="5.8" height="5.8" rx="0.6" fill="#a2a2a2"/><path d="M1.5 4.7 L4.7 1.5" stroke="#5a5a5a" stroke-width="0.8"/></svg>
<div class="r" style="left:723.30px;top:417.40px;width:1.50px;height:1.50px;background:#b8b8b8;"></div><div class="r" style="left:723.30px;top:421.10px;width:1.50px;height:1.50px;background:#b8b8b8;"></div>
<svg style="left:733.0px;top:415.8px" width="8.4" height="8.4" viewBox="0 0 8.4 8.4"><rect width="8.4" height="8.4" fill="#d8842a"/><rect x="0.7" y="0.7" width="7" height="7" fill="#f4f4f4"/><rect x="0.7" y="0.7" width="1.75" height="1.75" fill="#141414"/><rect x="4.2" y="0.7" width="1.75" height="1.75" fill="#141414"/><rect x="2.45" y="2.45" width="1.75" height="1.75" fill="#141414"/><rect x="5.95" y="2.45" width="1.75" height="1.75" fill="#141414"/><rect x="0.7" y="4.2" width="1.75" height="1.75" fill="#141414"/><rect x="4.2" y="4.2" width="1.75" height="1.75" fill="#141414"/><rect x="2.45" y="5.95" width="1.75" height="1.75" fill="#141414"/><rect x="5.95" y="5.95" width="1.75" height="1.75" fill="#141414"/></svg>
<svg style="left:742.2px;top:416.0px" width="8" height="8" viewBox="-4 -4 8 8"><circle cx="-1.6" cy="-1.4" r="1.5" fill="#f09a2e"/><circle cx="1.7" cy="1.4" r="1.2" fill="#e8902a"/></svg>
<svg style="left:751.0px;top:415.6px" width="8.8" height="8.8" viewBox="-4.4 -4.4 8.8 8.8"><rect x="-4.4" y="-4.4" width="8.8" height="8.8" fill="#5c5c5c"/><circle r="3.9" fill="#222"/><circle cx="-0.9" cy="-1.1" r="2.1" fill="#4a4a4a" opacity="0.75"/></svg>
<div class="r" style="left:601.20px;top:429.22px;width:3.40px;height:0.60px;background:#6a6a6a;"></div>
<svg style="left:604.6px;top:425.52px" width="8" height="8" viewBox="-4 -4 8 8"><path d="M0 -2.4 L2.6 2.3 L-2.6 2.3 Z" fill="#4f9fe8"/><circle cx="0" cy="-2.6" r="0.75" fill="#eaf3ff"/><circle cx="2.8" cy="2.5" r="0.75" fill="#eaf3ff"/><circle cx="-2.8" cy="2.5" r="0.75" fill="#eaf3ff"/></svg>

<svg style="left:714.6px;top:426.41999999999996px" width="6.2" height="6.2" viewBox="0 0 6.2 6.2"><rect x="0.2" y="0.2" width="5.8" height="5.8" rx="0.6" fill="#a2a2a2"/><path d="M1.5 4.7 L4.7 1.5" stroke="#5a5a5a" stroke-width="0.8"/></svg>
<div class="r" style="left:723.30px;top:426.92px;width:1.50px;height:1.50px;background:#b8b8b8;"></div><div class="r" style="left:723.30px;top:430.62px;width:1.50px;height:1.50px;background:#b8b8b8;"></div>
<svg style="left:733.0px;top:425.32px" width="8.4" height="8.4" viewBox="0 0 8.4 8.4"><rect width="8.4" height="8.4" fill="#d8842a"/><rect x="0.7" y="0.7" width="7" height="7" fill="#f4f4f4"/><rect x="0.7" y="0.7" width="1.75" height="1.75" fill="#141414"/><rect x="4.2" y="0.7" width="1.75" height="1.75" fill="#141414"/><rect x="2.45" y="2.45" width="1.75" height="1.75" fill="#141414"/><rect x="5.95" y="2.45" width="1.75" height="1.75" fill="#141414"/><rect x="0.7" y="4.2" width="1.75" height="1.75" fill="#141414"/><rect x="4.2" y="4.2" width="1.75" height="1.75" fill="#141414"/><rect x="2.45" y="5.95" width="1.75" height="1.75" fill="#141414"/><rect x="5.95" y="5.95" width="1.75" height="1.75" fill="#141414"/></svg>
<svg style="left:742.2px;top:425.52px" width="8" height="8" viewBox="-4 -4 8 8"><circle cx="-1.6" cy="-1.4" r="1.5" fill="#f09a2e"/><circle cx="1.7" cy="1.4" r="1.2" fill="#e8902a"/></svg>
<svg style="left:751.0px;top:425.12px" width="8.8" height="8.8" viewBox="-4.4 -4.4 8.8 8.8"><rect x="-4.4" y="-4.4" width="8.8" height="8.8" fill="#5c5c5c"/><circle r="3.9" fill="#222"/><circle cx="-0.9" cy="-1.1" r="2.1" fill="#4a4a4a" opacity="0.75"/></svg>
<div class="r" style="left:603.60px;top:438.74px;width:1.00px;height:0.60px;background:#6a6a6a;"></div>
<svg style="left:598.2px;top:436.03999999999996px" width="6" height="6" viewBox="-3 -3 6 6"><rect x="-2.4" y="-2.4" width="4.8" height="4.8" rx="0.3" fill="#3a3a3a" stroke="#949494" stroke-width="0.6"/><path d="M-1.5 0 H1.5" stroke="#9a9a9a" stroke-width="0.5"/><path d="M0 -1.5 V1.5" stroke="#9a9a9a" stroke-width="0.5"/></svg>
<svg style="left:604.6px;top:435.03999999999996px" width="8" height="8" viewBox="-4 -4 8 8"><ellipse rx="2.5" ry="3.2" fill="#37d486"/><path d="M0 -3.2 A2.5 3.2 0 0 1 0 3.2 Z" fill="#e8f4ec"/></svg>

<svg style="left:714.6px;top:435.93999999999994px" width="6.2" height="6.2" viewBox="0 0 6.2 6.2"><rect x="0.2" y="0.2" width="5.8" height="5.8" rx="0.6" fill="#a2a2a2"/><path d="M1.5 4.7 L4.7 1.5" stroke="#5a5a5a" stroke-width="0.8"/></svg>
<div class="r" style="left:723.30px;top:436.44px;width:1.50px;height:1.50px;background:#b8b8b8;"></div><div class="r" style="left:723.30px;top:440.14px;width:1.50px;height:1.50px;background:#b8b8b8;"></div>
<svg style="left:725.4px;top:436.03999999999996px" width="6" height="6" viewBox="0 0 6 6"><path d="M0.6 3.2 L2.2 4.6 L5.4 1.2" fill="none" stroke="#4fc795" stroke-width="0.8"/></svg>
<svg style="left:732.2px;top:434.64px" width="8.8" height="8.8" viewBox="-4.4 -4.4 8.8 8.8"><rect x="-4.4" y="-4.4" width="8.8" height="8.8" fill="#5c5c5c"/><circle r="3.9" fill="#222"/><circle cx="-0.9" cy="-1.1" r="2.1" fill="#4a4a4a" opacity="0.75"/></svg>
<div class="r" style="left:603.60px;top:448.26px;width:1.00px;height:0.60px;background:#6a6a6a;"></div>
<svg style="left:598.2px;top:445.55999999999995px" width="6" height="6" viewBox="-3 -3 6 6"><rect x="-2.4" y="-2.4" width="4.8" height="4.8" rx="0.3" fill="#3a3a3a" stroke="#949494" stroke-width="0.6"/><path d="M-1.5 0 H1.5" stroke="#9a9a9a" stroke-width="0.5"/><path d="M0 -1.5 V1.5" stroke="#9a9a9a" stroke-width="0.5"/></svg>
<svg style="left:604.6px;top:444.55999999999995px" width="8" height="8" viewBox="-4 -4 8 8"><ellipse rx="2.5" ry="3.2" fill="#37d486"/><path d="M0 -3.2 A2.5 3.2 0 0 1 0 3.2 Z" fill="#e8f4ec"/></svg>

<svg style="left:714.6px;top:445.4599999999999px" width="6.2" height="6.2" viewBox="0 0 6.2 6.2"><rect x="0.2" y="0.2" width="5.8" height="5.8" rx="0.6" fill="#a2a2a2"/><path d="M1.5 4.7 L4.7 1.5" stroke="#5a5a5a" stroke-width="0.8"/></svg>
<div class="r" style="left:723.30px;top:445.96px;width:1.50px;height:1.50px;background:#b8b8b8;"></div><div class="r" style="left:723.30px;top:449.66px;width:1.50px;height:1.50px;background:#b8b8b8;"></div>
<svg style="left:725.4px;top:445.55999999999995px" width="6" height="6" viewBox="0 0 6 6"><path d="M0.6 3.2 L2.2 4.6 L5.4 1.2" fill="none" stroke="#4fc795" stroke-width="0.8"/></svg>
<div class="r" style="left:582.60px;top:453.40px;width:208.00px;height:2.20px;background:#343434;"></div>
<div class="r" style="left:582.60px;top:454.60px;width:208.00px;height:0.70px;background:#444;"></div>
<div class="r" style="left:582.60px;top:455.60px;width:208.00px;height:144.00px;background:#3b3b3b;"></div>
<div class="r" style="left:583.90px;top:459.10px;width:6.60px;height:1.20px;background:#c4c4c4;"></div><div class="r" style="left:583.90px;top:461.30px;width:6.60px;height:1.20px;background:#c4c4c4;"></div><div class="r" style="left:583.90px;top:463.50px;width:6.60px;height:1.20px;background:#c4c4c4;"></div>



<svg style="left:724.5px;top:458.4px" width="8" height="8" viewBox="-4 -4 8 8"><path d="M3 0 H-3 M-0.6 -2.3 L-3 0 L-0.6 2.3" fill="none" stroke="#c8c8c8" stroke-width="0.8"/></svg>
<svg style="left:734.2px;top:458.4px" width="8" height="8" viewBox="-4 -4 8 8"><path d="M-3 0 H3 M0.6 -2.3 L3 0 L0.6 2.3" fill="none" stroke="#555" stroke-width="0.8"/></svg>
<svg style="left:743.3px;top:458.4px" width="8" height="8" viewBox="-4 -4 8 8"><path d="M0 3.2 V-3 M-2.3 -0.6 L0 -3 L2.3 -0.6" fill="none" stroke="#c8c8c8" stroke-width="0.8"/></svg>
<svg style="left:753.6px;top:458.2px" width="8" height="8" viewBox="-4 -4 8 8"><circle cx="-0.6" cy="-0.8" r="1.9" fill="none" stroke="#a8a8a8" stroke-width="0.8"/><path d="M0.7 0.6 L2.6 3" stroke="#a8a8a8" stroke-width="0.9" fill="none"/></svg>
<svg style="left:762.6px;top:458.4px" width="8" height="8" viewBox="0 0 8 8"><rect x="1.6" y="3.4" width="4.8" height="3.8" fill="none" stroke="#a0a0a0" stroke-width="0.7"/><path d="M2.6 3.4 V2.4 A1.4 1.4 0 0 1 5.4 2.4 V3.4" fill="none" stroke="#a0a0a0" stroke-width="0.7"/></svg>
<svg style="left:771.8px;top:458.4px" width="8" height="8" viewBox="0 0 8 8"><circle cx="4" cy="4" r="3" fill="none" stroke="#8a8a8a" stroke-width="0.7"/><circle cx="4" cy="4" r="1.1" fill="none" stroke="#8a8a8a" stroke-width="0.6"/></svg>
<svg style="left:781.8px;top:458.4px" width="8" height="8" viewBox="0 0 8 8"><rect x="1.2" y="0.8" width="5.4" height="6.6" fill="none" stroke="#a8a8a8" stroke-width="0.7"/><path d="M2.6 4.1 H5.2 M3.9 2.8 V5.4" stroke="#a8a8a8" stroke-width="0.7"/></svg>
<svg style="left:583.6px;top:470.6px" width="8" height="8" viewBox="0 0 8 8"><rect width="8" height="8" fill="#3a4252"/><path d="M1 7 L2.5 2 L4 5.5 L5.5 1.5 L7 7 Z" fill="#7f9ee0"/><path d="M0 0 H8 V1.4 H0 Z" fill="#23272e"/></svg>

<div class="r" style="left:583.00px;top:481.50px;width:16.30px;height:7.90px;background:#5a5a5a;border-radius:0.8px;"></div>

<div class="r" style="left:600.00px;top:481.50px;width:16.60px;height:7.90px;background:#80a8e2;border-radius:0.8px;"></div>


<svg style="left:582.7px;top:502.8px" width="7" height="7" viewBox="-3.5 -3.5 7 7"><circle r="2.9" fill="#3a3a3a" stroke="#b4b4b4" stroke-width="0.7"/><circle r="1.3" fill="#b4b4b4"/></svg>


<div class="r" style="left:621.80px;top:502.80px;width:142.00px;height:7.00px;background:#2a2a2a;"></div>

<svg style="left:764.2px;top:502.6px" width="7" height="7.4" viewBox="0 0 7 7.4"><rect width="7" height="7.4" fill="#4a4a4a"/><path d="M1.6 1.2 H5.4 V5 L3.5 4 L1.6 5 Z M1.6 1.2 V6.6" fill="#777" stroke="#8c8c8c" stroke-width="0.5"/></svg>
<svg style="left:771.6px;top:502.6px" width="6.4" height="7.4" viewBox="0 0 6.4 7.4"><rect width="6.4" height="7.4" fill="#4a4a4a"/><rect x="1.2" y="2" width="4" height="2.6" fill="#8a8a8a"/><path d="M1.8 5.2 L3.2 6.4 L4.6 5.2" fill="none" stroke="#aaa" stroke-width="0.6"/></svg>
<svg style="left:778.8px;top:502px" width="8.6" height="8.6" viewBox="-4.3 -4.3 8.6 8.6"><circle r="3.6" fill="#3a3a3a" stroke="#b0b0b0" stroke-width="0.8"/><path d="M-1.6 -1.8 L1.8 0.6 L0.3 0.8 L-0.3 2.1 Z" fill="#b0b0b0"/></svg>
<div class="r" style="left:583.00px;top:512.60px;width:207.00px;height:0.60px;background:#2e2e2e;"></div>
<svg style="left:582.7px;top:514.7px" width="7" height="7" viewBox="-3.5 -3.5 7 7"><circle r="2.9" fill="#3a3a3a" stroke="#b4b4b4" stroke-width="0.7"/><circle r="1.3" fill="#b4b4b4"/></svg>


<div class="r" style="left:621.80px;top:515.00px;width:166.00px;height:6.40px;background:#5a5a5a;border-radius:0.8px;"></div>
<svg style="left:780.6px;top:515.4000000000001px" width="6" height="6" viewBox="-3 -3 6 6"><path d="M-1.7 -0.85 L0 0.85 L1.7 -0.85" fill="none" stroke="#e0e0e0" stroke-width="0.9"/></svg>
<svg style="left:582.7px;top:524.3000000000001px" width="7" height="7" viewBox="-3.5 -3.5 7 7"><circle r="2.9" fill="#3a3a3a" stroke="#b4b4b4" stroke-width="0.7"/><circle r="1.3" fill="#b4b4b4"/></svg>

<div class="r" style="left:621.80px;top:524.30px;width:37.60px;height:7.00px;background:#2a2a2a;"></div>

<svg style="left:655.6px;top:523.8000000000001px" width="4" height="8" viewBox="-2 -4 4 8"><path d="M-1.2 -0.9 L0 -2.2 L1.2 -0.9 M-1.2 0.9 L0 2.2 L1.2 0.9" fill="none" stroke="#8a8a8a" stroke-width="0.6"/></svg>
<svg style="left:582.7px;top:534.3000000000001px" width="7" height="7" viewBox="-3.5 -3.5 7 7"><circle r="2.9" fill="#3a3a3a" stroke="#b4b4b4" stroke-width="0.7"/><circle r="1.3" fill="#b4b4b4"/></svg>

<div class="r" style="left:621.80px;top:534.30px;width:37.60px;height:7.00px;background:#2a2a2a;"></div>

<svg style="left:655.6px;top:533.8000000000001px" width="4" height="8" viewBox="-2 -4 4 8"><path d="M-1.2 -0.9 L0 -2.2 L1.2 -0.9 M-1.2 0.9 L0 2.2 L1.2 0.9" fill="none" stroke="#8a8a8a" stroke-width="0.6"/></svg>
<div class="r" style="left:588.80px;top:543.50px;width:58.60px;height:7.00px;background:#525252;border-radius:0.8px;"></div>

<div class="r" style="left:583.00px;top:554.20px;width:207.00px;height:0.60px;background:#2e2e2e;"></div>
<svg style="left:582.7px;top:556.6px" width="7" height="7" viewBox="-3.5 -3.5 7 7"><circle r="2.9" fill="#3a3a3a" stroke="#b4b4b4" stroke-width="0.7"/><circle r="1.3" fill="#b4b4b4"/></svg>


<div class="r" style="left:621.80px;top:556.90px;width:166.00px;height:6.40px;background:#5a5a5a;border-radius:0.8px;"></div>
<svg style="left:780.6px;top:557.3000000000001px" width="6" height="6" viewBox="-3 -3 6 6"><path d="M-1.7 -0.85 L0 0.85 L1.7 -0.85" fill="none" stroke="#e0e0e0" stroke-width="0.9"/></svg>
<svg style="left:582.7px;top:566.2px" width="7" height="7" viewBox="-3.5 -3.5 7 7"><circle r="2.9" fill="#3a3a3a" stroke="#b4b4b4" stroke-width="0.7"/><circle r="1.3" fill="#b4b4b4"/></svg>

<div class="r" style="left:621.80px;top:566.20px;width:37.60px;height:7.00px;background:#2a2a2a;"></div>

<svg style="left:655.6px;top:565.7px" width="4" height="8" viewBox="-2 -4 4 8"><path d="M-1.2 -0.9 L0 -2.2 L1.2 -0.9 M-1.2 0.9 L0 2.2 L1.2 0.9" fill="none" stroke="#8a8a8a" stroke-width="0.6"/></svg>
<svg style="left:582.7px;top:576.2px" width="7" height="7" viewBox="-3.5 -3.5 7 7"><circle r="2.9" fill="#3a3a3a" stroke="#b4b4b4" stroke-width="0.7"/><circle r="1.3" fill="#b4b4b4"/></svg>

<div class="r" style="left:621.80px;top:576.20px;width:37.60px;height:7.00px;background:#2a2a2a;"></div>

<svg style="left:655.6px;top:575.7px" width="4" height="8" viewBox="-2 -4 4 8"><path d="M-1.2 -0.9 L0 -2.2 L1.2 -0.9 M-1.2 0.9 L0 2.2 L1.2 0.9" fill="none" stroke="#8a8a8a" stroke-width="0.6"/></svg>
<div class="r" style="left:588.80px;top:585.40px;width:58.60px;height:7.00px;background:#525252;border-radius:0.8px;"></div>

<div class="r" style="left:583.00px;top:595.80px;width:207.00px;height:0.60px;background:#2e2e2e;"></div>
<svg style="left:582.7px;top:598.1px" width="7" height="7" viewBox="-3.5 -3.5 7 7"><circle r="2.9" fill="#3a3a3a" stroke="#b4b4b4" stroke-width="0.7"/><circle r="1.3" fill="#b4b4b4"/></svg>
<div class="r" style="left:621.80px;top:598.60px;width:166.00px;height:6.00px;background:#5a5a5a;"></div>
<div class="r" style="left:790.60px;top:210.00px;width:9.40px;height:390.00px;background:#2e2e2e;"></div>
<div class="r" style="left:790.60px;top:210.00px;width:9.40px;height:28.00px;background:#3a3a3a;"></div>
<div class="r" style="left:790.60px;top:455.60px;width:9.40px;height:31.00px;background:#3a3a3a;"></div>






</div>
<div id="tx">
<span class="t" style="left:4.30px;top:201.00px;font-size:5.4px;color:#e0e0e0;font-weight:400;">File</span>
<span class="t" style="left:20.00px;top:201.00px;font-size:5.4px;color:#e0e0e0;font-weight:400;">Edit</span>
<span class="t" style="left:36.20px;top:201.00px;font-size:5.4px;color:#e0e0e0;font-weight:400;">Create</span>
<span class="t" style="left:60.00px;top:201.00px;font-size:5.4px;color:#e0e0e0;font-weight:400;">Modes</span>
<span class="t" style="left:83.20px;top:201.00px;font-size:5.4px;color:#e0e0e0;font-weight:400;">Select</span>
<span class="t" style="left:105.80px;top:201.00px;font-size:5.4px;color:#e0e0e0;font-weight:400;">Tools</span>
<span class="t" style="left:125.80px;top:201.00px;font-size:5.4px;color:#e0e0e0;font-weight:400;">Mesh</span>
<span class="t" style="left:146.20px;top:201.00px;font-size:5.4px;color:#e0e0e0;font-weight:400;">Spline</span>
<span class="t" style="left:168.00px;top:201.00px;font-size:5.4px;color:#e0e0e0;font-weight:400;">Volume</span>
<span class="t" style="left:192.50px;top:201.00px;font-size:5.4px;color:#e0e0e0;font-weight:400;">MoGraph</span>
<span class="t" style="left:223.00px;top:201.00px;font-size:5.4px;color:#e0e0e0;font-weight:400;">Character</span>
<span class="t" style="left:254.50px;top:201.00px;font-size:5.4px;color:#e0e0e0;font-weight:400;">Animate</span>
<span class="t" style="left:281.50px;top:201.00px;font-size:5.4px;color:#e0e0e0;font-weight:400;">Simulate</span>
<span class="t" style="left:310.00px;top:201.00px;font-size:5.4px;color:#e0e0e0;font-weight:400;">Tracker</span>
<span class="t" style="left:335.00px;top:201.00px;font-size:5.4px;color:#e0e0e0;font-weight:400;">Render</span>
<span class="t" style="left:359.20px;top:201.00px;font-size:5.4px;color:#e0e0e0;font-weight:400;">Extensions</span>
<span class="t" style="left:392.50px;top:201.00px;font-size:5.4px;color:#e0e0e0;font-weight:400;">Window</span>
<span class="t" style="left:420.00px;top:201.00px;font-size:5.4px;color:#e0e0e0;font-weight:400;">Help</span>
<span class="t" style="left:557.00px;top:201.00px;font-size:5.4px;color:#c8c8c8;font-weight:400;">Node Space:</span>
<span class="t" style="left:595.50px;top:201.00px;font-size:5.4px;color:#e0e0e0;font-weight:400;">Current (ProRender)</span>
<span class="t" style="left:688.00px;top:201.00px;font-size:5.4px;color:#c8c8c8;font-weight:400;">Layout:</span>
<span class="t" style="left:713.00px;top:201.00px;font-size:5.4px;color:#e0e0e0;font-weight:400;">Startup</span>
<span class="t" style="left:156.3px;top:216.8px;width:10px;text-align:center;font-size:8.8px;font-weight:700;color:#161616;">X</span>
<span class="t" style="left:173.4px;top:216.8px;width:10px;text-align:center;font-size:8.8px;font-weight:700;color:#161616;">Y</span>
<span class="t" style="left:190.5px;top:216.8px;width:10px;text-align:center;font-size:8.8px;font-weight:700;color:#161616;">Z</span>
<span class="t" style="left:33.80px;top:232.30px;font-size:5.4px;color:#e0e0e0;font-weight:400;">View</span>
<span class="t" style="left:52.00px;top:232.30px;font-size:5.4px;color:#e0e0e0;font-weight:400;">Cameras</span>
<span class="t" style="left:80.50px;top:232.30px;font-size:5.4px;color:#e0e0e0;font-weight:400;">Display</span>
<span class="t" style="left:105.50px;top:232.30px;font-size:5.4px;color:#e0e0e0;font-weight:400;">Options</span>
<span class="t" style="left:131.80px;top:232.30px;font-size:5.4px;color:#e0e0e0;font-weight:400;">Filter</span>
<span class="t" style="left:150.80px;top:232.30px;font-size:5.4px;color:#e0e0e0;font-weight:400;">Panel</span>
<span class="t" style="left:171.20px;top:232.30px;font-size:5.4px;color:#e0e0e0;font-weight:400;">ProRender</span>
<span class="t" style="left:4.6px;top:370.59999999999997px;width:8px;text-align:center;font-size:8.4px;font-weight:700;color:#141414;">S</span>
<span class="t" style="left:4.6px;top:388.09999999999997px;width:8px;text-align:center;font-size:8.4px;font-weight:700;color:#141414;">S</span>
<span class="t" style="left:4.6px;top:405.5px;width:8px;text-align:center;font-size:8.4px;font-weight:700;color:#141414;">S</span>
<span class="t" style="left:32.20px;top:558.60px;font-size:5.4px;color:#c4c4c4;font-weight:400;">0</span>
<span class="t" style="left:54.80px;top:558.60px;font-size:5.4px;color:#c4c4c4;font-weight:400;">5</span>
<span class="t" style="left:81.20px;top:558.60px;font-size:5.4px;color:#c4c4c4;font-weight:400;">10</span>
<span class="t" style="left:109.10px;top:558.60px;font-size:5.4px;color:#c4c4c4;font-weight:400;">15</span>
<span class="t" style="left:137.00px;top:558.60px;font-size:5.4px;color:#c4c4c4;font-weight:400;">20</span>
<span class="t" style="left:164.90px;top:558.60px;font-size:5.4px;color:#c4c4c4;font-weight:400;">25</span>
<span class="t" style="left:192.80px;top:558.60px;font-size:5.4px;color:#c4c4c4;font-weight:400;">30</span>
<span class="t" style="left:220.70px;top:558.60px;font-size:5.4px;color:#c4c4c4;font-weight:400;">35</span>
<span class="t" style="left:248.60px;top:558.60px;font-size:5.4px;color:#c4c4c4;font-weight:400;">40</span>
<span class="t" style="left:276.50px;top:558.60px;font-size:5.4px;color:#c4c4c4;font-weight:400;">45</span>
<span class="t" style="left:304.40px;top:558.60px;font-size:5.4px;color:#c4c4c4;font-weight:400;">50</span>
<span class="t" style="left:332.30px;top:558.60px;font-size:5.4px;color:#c4c4c4;font-weight:400;">55</span>
<span class="t" style="left:360.20px;top:558.60px;font-size:5.4px;color:#c4c4c4;font-weight:400;">60</span>
<span class="t" style="left:388.10px;top:558.60px;font-size:5.4px;color:#c4c4c4;font-weight:400;">65</span>
<span class="t" style="left:416.00px;top:558.60px;font-size:5.4px;color:#c4c4c4;font-weight:400;">70</span>
<span class="t" style="left:443.90px;top:558.60px;font-size:5.4px;color:#c4c4c4;font-weight:400;">75</span>
<span class="t" style="left:471.80px;top:558.60px;font-size:5.4px;color:#c4c4c4;font-weight:400;">80</span>
<span class="t" style="left:499.70px;top:558.60px;font-size:5.4px;color:#c4c4c4;font-weight:400;">85</span>
<span class="t" style="left:527.60px;top:558.60px;font-size:5.4px;color:#c4c4c4;font-weight:400;">90</span>
<span class="t" style="left:543.00px;top:560.30px;font-size:5.4px;color:#cfcfcf;font-weight:400;">0 F</span>
<span class="t" style="left:26.00px;top:574.50px;font-size:5.4px;color:#cfcfcf;font-weight:400;">0 F</span>
<span class="t" style="left:73.00px;top:574.50px;font-size:5.4px;color:#e0e0e0;font-weight:400;">0 F</span>
<span class="t" style="left:273.60px;top:574.50px;font-size:5.4px;color:#e0e0e0;font-weight:400;">90 F</span>
<span class="t" style="left:299.50px;top:574.50px;font-size:5.4px;color:#cfcfcf;font-weight:400;">90 F</span>
<span class="t" style="left:537px;top:574.6px;width:8px;text-align:center;font-size:6.6px;font-weight:700;color:#161616;">P</span>
<span class="t" style="left:33.80px;top:587.80px;font-size:5.4px;color:#e0e0e0;font-weight:400;">Create</span>
<span class="t" style="left:57.00px;top:587.80px;font-size:5.4px;color:#e0e0e0;font-weight:400;">Edit</span>
<span class="t" style="left:73.90px;top:587.80px;font-size:5.4px;color:#e0e0e0;font-weight:400;">View</span>
<span class="t" style="left:92.20px;top:587.80px;font-size:5.4px;color:#e0e0e0;font-weight:400;">Select</span>
<span class="t" style="left:114.40px;top:587.80px;font-size:5.4px;color:#e0e0e0;font-weight:400;">Material</span>
<span class="t" style="left:141.40px;top:587.80px;font-size:5.4px;color:#e0e0e0;font-weight:400;">Texture</span>
<span class="t" style="left:421.00px;top:587.80px;font-size:5.4px;color:#666;font-weight:400;">--</span>
<span class="t" style="left:474.00px;top:587.80px;font-size:5.4px;color:#666;font-weight:400;">--</span>
<span class="t" style="left:527.00px;top:587.80px;font-size:5.4px;color:#666;font-weight:400;">--</span>
<span class="t" style="left:595.80px;top:213.90px;font-size:5.4px;color:#e0e0e0;font-weight:400;">File</span>
<span class="t" style="left:611.40px;top:213.90px;font-size:5.4px;color:#e0e0e0;font-weight:400;">Edit</span>
<span class="t" style="left:628.00px;top:213.90px;font-size:5.4px;color:#e0e0e0;font-weight:400;">View</span>
<span class="t" style="left:647.00px;top:213.90px;font-size:5.4px;color:#e0e0e0;font-weight:400;">Object</span>
<span class="t" style="left:670.00px;top:213.90px;font-size:5.4px;color:#e0e0e0;font-weight:400;">Tags</span>
<span class="t" style="left:688.70px;top:213.90px;font-size:5.4px;color:#e0e0e0;font-weight:400;">Bookmarks</span>
<span class="t" style="left:598.40px;top:225.40px;font-size:5.4px;color:#b8b8b8;font-weight:400;letter-spacing:-0.01px;">-----------------------------------------</span>
<span class="t" style="left:598.40px;top:235.12px;font-size:5.4px;color:#d6d6d6;font-weight:400;">Scene by Yan Ge</span>
<span class="t" style="left:598.40px;top:244.44px;font-size:5.4px;color:#b8b8b8;font-weight:400;letter-spacing:-0.01px;">-----------------------------------------</span>
<span class="t" style="left:598.40px;top:254.16px;font-size:5.4px;color:#bdbdbd;font-weight:400;letter-spacing:0.15px;">===========</span>
<span class="t" style="left:637.30px;top:254.16px;font-size:5.4px;color:#dadada;font-weight:400;">VDB</span>
<span class="t" style="left:651.10px;top:254.16px;font-size:5.4px;color:#bdbdbd;font-weight:400;letter-spacing:0.15px;">============</span>
<span class="t" style="left:598.40px;top:263.68px;font-size:5.4px;color:#bdbdbd;font-weight:400;letter-spacing:0.15px;">===========</span>
<span class="t" style="left:637.30px;top:263.68px;font-size:5.4px;color:#dadada;font-weight:400;">Planet</span>
<span class="t" style="left:654.70px;top:263.68px;font-size:5.4px;color:#bdbdbd;font-weight:400;letter-spacing:0.15px;">============</span>
<span class="t" style="left:604.20px;top:273.20px;font-size:5.4px;color:#d6d6d6;font-weight:400;">SmallRocks 2</span>
<span class="t" style="left:604.20px;top:282.72px;font-size:5.4px;color:#d6d6d6;font-weight:400;">SmallRocks 1</span>
<span class="t" style="left:604.20px;top:292.24px;font-size:5.4px;color:#d6d6d6;font-weight:400;">Stone 3</span>
<span class="t" style="left:604.20px;top:301.76px;font-size:5.4px;color:#d6d6d6;font-weight:400;">Stone 2</span>
<span class="t" style="left:604.20px;top:311.28px;font-size:5.4px;color:#d6d6d6;font-weight:400;">Stone 1</span>
<span class="t" style="left:604.20px;top:320.80px;font-size:5.4px;color:#d6d6d6;font-weight:400;">BigStone</span>
<span class="t" style="left:604.20px;top:330.32px;font-size:5.4px;color:#d6d6d6;font-weight:400;">Ground</span>
<span class="t" style="left:598.40px;top:339.84px;font-size:5.4px;color:#bdbdbd;font-weight:400;letter-spacing:0.15px;">===========</span>
<span class="t" style="left:637.30px;top:339.84px;font-size:5.4px;color:#dadada;font-weight:400;">Ship</span>
<span class="t" style="left:649.90px;top:339.84px;font-size:5.4px;color:#bdbdbd;font-weight:400;letter-spacing:0.15px;">============</span>
<span class="t" style="left:604.20px;top:349.36px;font-size:5.4px;color:#d6d6d6;font-weight:400;">Ship_SDS</span>
<span class="t" style="left:609.00px;top:358.88px;font-size:5.4px;color:#d6d6d6;font-weight:400;">Ship</span>
<span class="t" style="left:614.10px;top:368.40px;font-size:5.4px;color:#d6d6d6;font-weight:400;">Head</span>
<span class="t" style="left:614.10px;top:377.92px;font-size:5.4px;color:#d6d6d6;font-weight:400;">Front</span>
<span class="t" style="left:614.10px;top:387.44px;font-size:5.4px;color:#d6d6d6;font-weight:400;">Frame</span>
<span class="t" style="left:614.10px;top:396.96px;font-size:5.4px;color:#d6d6d6;font-weight:400;">Windows</span>
<span class="t" style="left:614.10px;top:406.48px;font-size:5.4px;color:#d6d6d6;font-weight:400;">Body</span>
<span class="t" style="left:614.10px;top:416.00px;font-size:5.4px;color:#d6d6d6;font-weight:400;">Engine</span>
<span class="t" style="left:614.10px;top:425.52px;font-size:5.4px;color:#d6d6d6;font-weight:400;">Back</span>
<span class="t" style="left:614.10px;top:435.04px;font-size:5.4px;color:#d6d6d6;font-weight:400;">Symmetry</span>
<span class="t" style="left:614.10px;top:444.56px;font-size:5.4px;color:#d6d6d6;font-weight:400;">Symmetry</span>
<span class="t" style="left:595.80px;top:457.50px;font-size:5.4px;color:#e0e0e0;font-weight:400;">Mode</span>
<span class="t" style="left:616.90px;top:457.50px;font-size:5.4px;color:#e0e0e0;font-weight:400;">Edit</span>
<span class="t" style="left:633.40px;top:457.50px;font-size:5.4px;color:#e0e0e0;font-weight:400;">User Data</span>
<span class="t" style="left:594.90px;top:470.20px;font-size:5.4px;color:#dcdcdc;font-weight:400;">Volume Tag [Volume]</span>
<span class="t" style="left:584.60px;top:481.50px;font-size:5.4px;color:#d8d8d8;font-weight:400;">Basic</span>
<span class="t" style="left:603.80px;top:481.50px;font-size:5.4px;color:#1c2430;font-weight:400;">Tag</span>
<span class="t" style="left:583.50px;top:492.40px;font-size:5.5px;color:#f0f0f0;font-weight:700;">Tag Properties</span>
<span class="t" style="left:593.40px;top:502.30px;font-size:5.2px;color:#aaa;font-weight:400;">></span>
<span class="t" style="left:597.90px;top:502.30px;font-size:5.4px;color:#d6d6d6;font-weight:400;">Material</span>
<span class="t" style="left:624.80px;top:502.30px;font-size:5.4px;color:#e4e4e4;font-weight:400;">Main Engine</span>
<span class="t" style="left:593.80px;top:514.20px;font-size:5.4px;color:#d6d6d6;font-weight:400;">Density</span>
<span class="t" style="left:613.60px;top:514.20px;font-size:5.4px;color:#9a9a9a;font-weight:400;">. . </span>
<span class="t" style="left:593.80px;top:523.80px;font-size:5.4px;color:#d6d6d6;font-weight:400;">Input Min</span>
<span class="t" style="left:625.00px;top:523.80px;font-size:5.4px;color:#e4e4e4;font-weight:400;">0</span>
<span class="t" style="left:593.80px;top:533.80px;font-size:5.4px;color:#d6d6d6;font-weight:400;">Input Max</span>
<span class="t" style="left:625.00px;top:533.80px;font-size:5.4px;color:#e4e4e4;font-weight:400;">1</span>
<span class="t" style="left:593.60px;top:543.00px;font-size:5.4px;color:#e0e0e0;font-weight:400;">Detect Value Range</span>
<span class="t" style="left:593.80px;top:556.10px;font-size:5.4px;color:#d6d6d6;font-weight:400;">Color</span>
<span class="t" style="left:609.60px;top:556.10px;font-size:5.4px;color:#9a9a9a;font-weight:400;">. . . </span>
<span class="t" style="left:593.80px;top:565.70px;font-size:5.4px;color:#d6d6d6;font-weight:400;">Input Min</span>
<span class="t" style="left:625.00px;top:565.70px;font-size:5.4px;color:#e4e4e4;font-weight:400;">0</span>
<span class="t" style="left:593.80px;top:575.70px;font-size:5.4px;color:#d6d6d6;font-weight:400;">Input Max</span>
<span class="t" style="left:625.00px;top:575.70px;font-size:5.4px;color:#e4e4e4;font-weight:400;">1</span>
<span class="t" style="left:593.60px;top:584.90px;font-size:5.4px;color:#e0e0e0;font-weight:400;">Detect Value Range</span>
<span class="t" style="left:796.3px;top:214.6px;font-size:5.5px;color:#f0f0f0;font-weight:700;transform-origin:0 0;transform:rotate(90deg) translate(0,-4px);">Objects</span>
<span class="t" style="left:796.3px;top:240.4px;font-size:5.5px;color:#a8a8a8;font-weight:400;transform-origin:0 0;transform:rotate(90deg) translate(0,-4px);">Takes</span>
<span class="t" style="left:796.3px;top:260.6px;font-size:5.5px;color:#a8a8a8;font-weight:400;transform-origin:0 0;transform:rotate(90deg) translate(0,-4px);">Content Browser</span>
<span class="t" style="left:796.3px;top:459.4px;font-size:5.5px;color:#f0f0f0;font-weight:700;transform-origin:0 0;transform:rotate(90deg) translate(0,-4px);">Attributes</span>
<span class="t" style="left:796.3px;top:490.6px;font-size:5.5px;color:#a8a8a8;font-weight:400;transform-origin:0 0;transform:rotate(90deg) translate(0,-4px);">Layers</span>
<span class="t" style="left:796.3px;top:511.8px;font-size:5.5px;color:#a8a8a8;font-weight:400;transform-origin:0 0;transform:rotate(90deg) translate(0,-4px);">Structure</span>
</div></div>
</body></html>
